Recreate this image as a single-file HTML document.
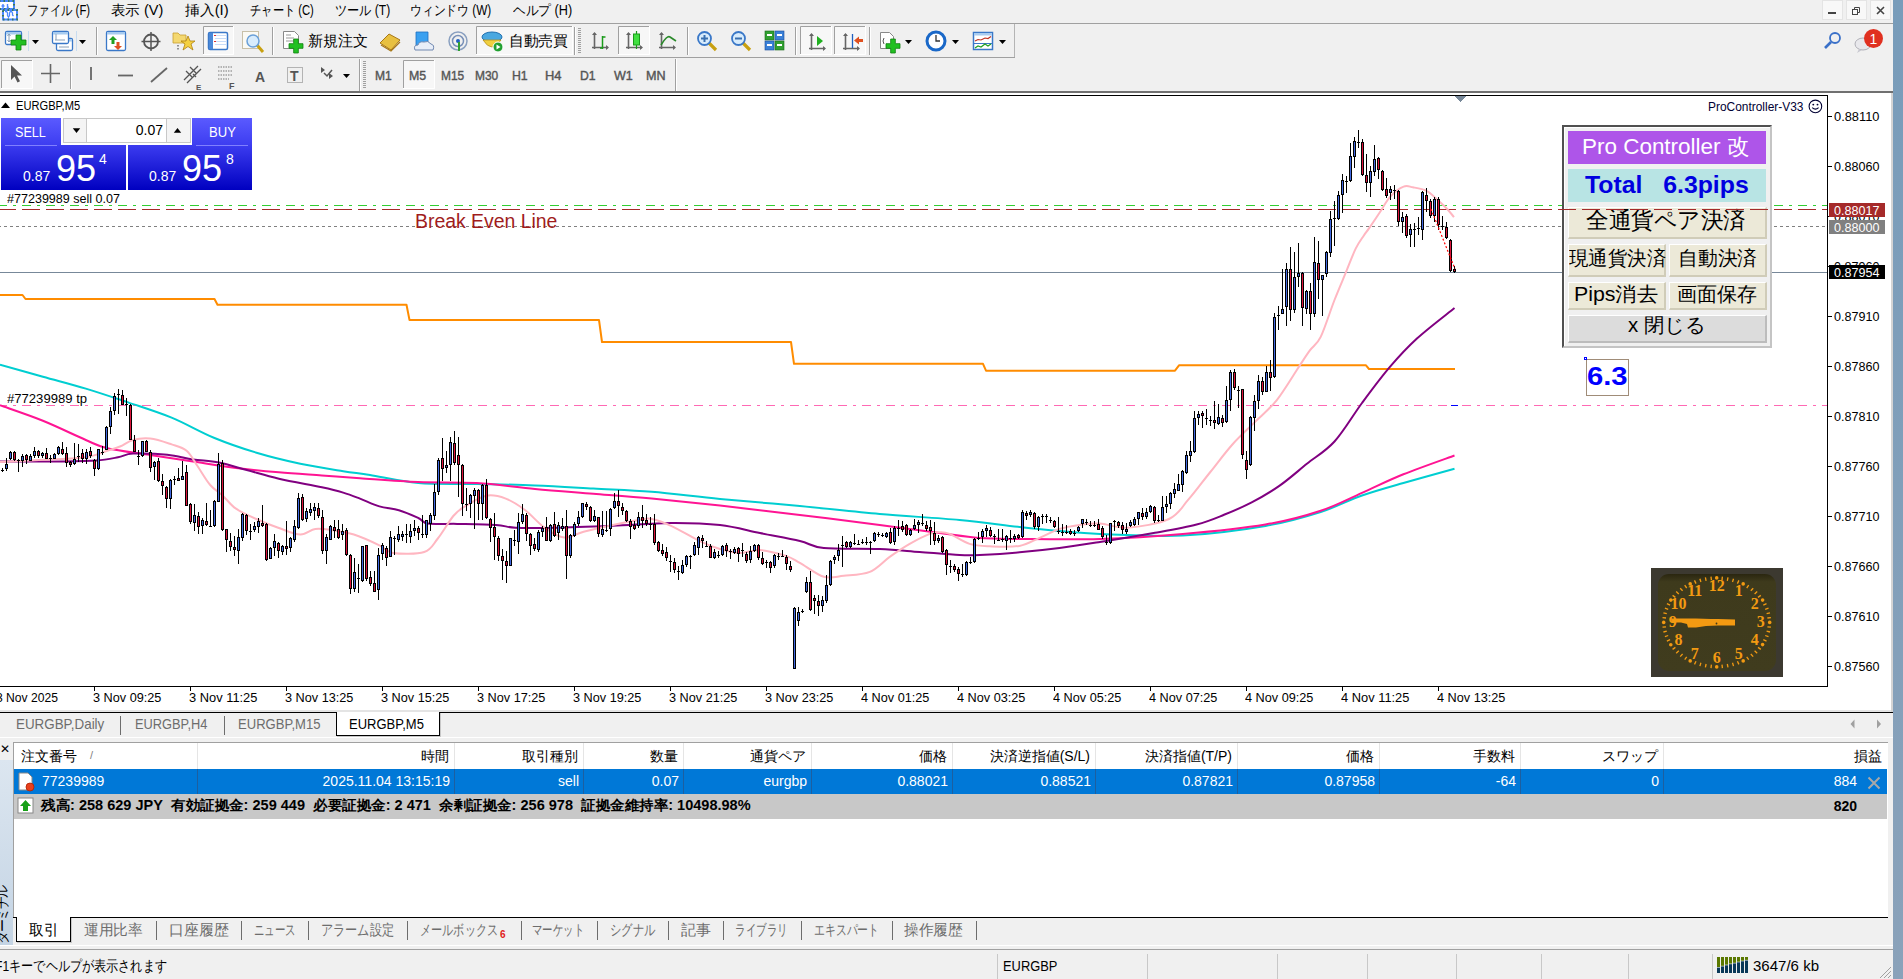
<!DOCTYPE html><html><head><meta charset="utf-8"><style>
*{box-sizing:border-box;margin:0;padding:0}
html,body{width:1903px;height:979px;overflow:hidden;background:#f0f0f0;font-family:"Liberation Sans",sans-serif;color:#000}
.a{position:absolute}
.t{position:absolute;white-space:nowrap;line-height:1}
.pl{position:absolute;left:1834px;font-size:12px;line-height:13px;white-space:nowrap}
.tl{position:absolute;top:691px;font-size:12px;line-height:13px;white-space:nowrap}
.btn{position:absolute;background:#ece9d8;border-style:solid;border-width:1px 2px 2px 1px;border-color:#fff #a0a0a0 #a0a0a0 #fff;text-align:center;white-space:nowrap;color:#000}
</style></head><body>
<div class="a" style="left:1893px;top:0;width:10px;height:979px;background:linear-gradient(#789cba,#8aa2ba)"></div>
<div class="a" style="left:0;top:23px;width:1893px;height:1px;background:#a0a0a0"></div>
<div class="t f" style="left:26.6px;top:3px;font-size:14px;transform:scaleX(0.8116);transform-origin:0 0">ファイル (F)</div>
<div class="t f" style="left:110.9px;top:3px;font-size:14px;transform:scaleX(1.0351);transform-origin:0 0">表示 (V)</div>
<div class="t f" style="left:185.0px;top:3px;font-size:14px;transform:scaleX(1.0592);transform-origin:0 0">挿入(I)</div>
<div class="t f" style="left:249.7px;top:3px;font-size:14px;transform:scaleX(0.8043);transform-origin:0 0">チャート (C)</div>
<div class="t f" style="left:334.5px;top:3px;font-size:14px;transform:scaleX(0.8667);transform-origin:0 0">ツール (T)</div>
<div class="t f" style="left:410.1px;top:3px;font-size:14px;transform:scaleX(0.8424);transform-origin:0 0">ウィンドウ (W)</div>
<div class="t f" style="left:513.4px;top:3px;font-size:14px;transform:scaleX(0.9063);transform-origin:0 0">ヘルプ (H)</div>
<div class="a" style="left:0;top:57px;width:1015px;height:1px;background:#a0a0a0"></div>
<div class="a" style="left:0;top:91px;width:1893px;height:2px;background:#707070"></div>
<svg class="a" style="left:0;top:24px" width="1893" height="33" viewBox="0 24 1893 33"><rect x="5.5" y="31.5" width="16" height="13" rx="1.5" fill="#fff" stroke="#3a78c8" stroke-width="1.3"/><rect x="6" y="32" width="15" height="2.5" fill="#a8ccf0"/><path d="M9,34 v8 M7.5,36 l1.5,-2 1.5,2 M7.5,40 l1.5,2 1.5,-2" stroke="#8aa0b8" fill="none" stroke-width="1"/><path d="M16.0,35 h5.0 v5.0 h5.0 v5.0 h-5.0 v5.0 h-5.0 v-5.0 h-5.0 v-5.0 h5.0 z" fill="#22c022" stroke="#108010" stroke-width="0.8"/><rect x="28" y="31" width="1" height="20" fill="#c8dcf0"/><path d="M32,40 h7 l-3.5,4 z" fill="#000"/><rect x="56.5" y="38.5" width="16" height="12" rx="1.5" fill="#fff" stroke="#3a78c8" stroke-width="1.3"/><rect x="57" y="39" width="15" height="2.5" fill="#a8ccf0"/><rect x="52.5" y="31.5" width="16" height="12" rx="1.5" fill="#fff" stroke="#3a78c8" stroke-width="1.3"/><rect x="53" y="32" width="15" height="2.5" fill="#a8ccf0"/><path d="M55,40 h10 M56,34 v6" stroke="#8aa0b8" stroke-width="1"/><path d="M59,47 h10" stroke="#8aa0b8" stroke-width="1"/><rect x="76" y="31" width="1" height="20" fill="#c8dcf0"/><path d="M79,40 h7 l-3.5,4 z" fill="#000"/><rect x="96" y="27" width="1" height="28" fill="#a0a0a0"/><rect x="97" y="27" width="1" height="28" fill="#fff"/><rect x="106.5" y="31.5" width="19" height="19" rx="1.5" fill="#fff" stroke="#3a78c8" stroke-width="1.3"/><rect x="107" y="32" width="18" height="2.5" fill="#a8ccf0"/><path d="M113,36 l4,4 h-2.5 v4 h-3 v-4 h-2.5 z" fill="#20a020"/><path d="M118,50 l4,-4 h-2.5 v-4 h-3 v4 h-2.5 z" fill="#e05020"/><circle cx="151" cy="41.5" r="7" fill="none" stroke="#555" stroke-width="1.8"/><path d="M151,32 v19 M141.5,41.5 h19" stroke="#555" stroke-width="1.5"/><path d="M173,33 h5 l2,2 h6 v8 h-13 z" fill="#f4d870" stroke="#c8a030" stroke-width="0.8"/><polygon points="188,36 190,41 195,41 191,44 193,50 188,46.5 183,50 185,44 181,41 186,41" fill="#f4d040" stroke="#b08010" stroke-width="0.8"/><path d="M178,45 v6" stroke="#333" stroke-dasharray="1.5 1.5"/><rect x="203" y="26" width="31" height="29" fill="#f7f7f7"/><path d="M203.5,55 V26.5 H234" stroke="#a0a0a0" fill="none"/><path d="M233.5,26 V54.5 H203" stroke="#fff" fill="none"/><rect x="208.5" y="32.5" width="19" height="17" rx="1.5" fill="#fff" stroke="#3a78c8" stroke-width="1.5"/><rect x="209" y="33" width="4" height="16" fill="#4a88d8"/><path d="M215,35.5 h12 M215,38.5 h12 M215,41.5 h12 M215,44.5 h12" stroke="#c8dcf8" stroke-width="1"/><path d="M214,35.5 h2 M214,41.5 h2" stroke="#e03030"/><rect x="242.5" y="31.5" width="16" height="17" fill="#fbfaf4" stroke="#c8c0a8"/><line x1="257" y1="45" x2="263" y2="52" stroke="#c8a010" stroke-width="3"/><circle cx="253" cy="41" r="6" fill="#d8ecfc" stroke="#6aa0d8" stroke-width="1.5"/><rect x="272" y="27" width="1" height="28" fill="#a0a0a0"/><rect x="273" y="27" width="1" height="28" fill="#fff"/><path d="M283.5,31.5 h11 l4,4 v13 h-15 z" fill="#fff" stroke="#888" stroke-width="1"/><path d="M286,35 h5 M286,38 h8 M286,41 h8" stroke="#999"/><path d="M293.6666666666667,39 h4.666666666666667 v4.666666666666667 h4.666666666666667 v4.666666666666667 h-4.666666666666667 v4.666666666666667 h-4.666666666666667 v-4.666666666666667 h-4.666666666666667 v-4.666666666666667 h4.666666666666667 z" fill="#22c022" stroke="#108010" stroke-width="0.8"/><path d="M380,43 l9,-9 l11,6 l-9,10 z" fill="#e8c040" stroke="#a87818" stroke-width="1"/><path d="M381,45 l10,6 l9,-9" stroke="#a87818" fill="none" stroke-width="1.2"/><path d="M416,32 h12 v14 h-12 z" fill="#3aa0f0" stroke="#2070c0" stroke-width="0.8"/><path d="M415,50 q-2,-5 3,-5 q1,-4 6,-3 q4,-2 7,2 q4,1 2,6 z" fill="#e8eef8" stroke="#7088b0" stroke-width="1"/><circle cx="458" cy="41" r="9" fill="none" stroke="#8aa0c0" stroke-width="1.5"/><circle cx="458" cy="41" r="5.5" fill="none" stroke="#7890b8" stroke-width="1.5"/><circle cx="458" cy="41" r="2" fill="#2060c0"/><path d="M459,42 v9" stroke="#30a030" stroke-width="2"/><rect x="476" y="26" width="97" height="29" fill="#f7f7f7"/><path d="M476.5,55 V26.5 H573" stroke="#a0a0a0" fill="none"/><path d="M572.5,26 V54.5 H476" stroke="#fff" fill="none"/><ellipse cx="492" cy="37" rx="10" ry="5" fill="#4aa8e0" stroke="#2070b0" stroke-width="1"/><path d="M483,40 q9,14 18,0 z" fill="#f0d040" stroke="#b89020" stroke-width="0.8"/><circle cx="498" cy="47" r="5" fill="#20a030" stroke="#fff" stroke-width="1"/><path d="M496.5,44.5 l4,2.5 l-4,2.5 z" fill="#fff"/><rect x="574" y="27" width="1" height="28" fill="#a0a0a0"/><rect x="575" y="27" width="1" height="28" fill="#fff"/><rect x="578" y="28" width="3" height="1" fill="#a0a0a0"/><rect x="578" y="30" width="3" height="1" fill="#a0a0a0"/><rect x="578" y="32" width="3" height="1" fill="#a0a0a0"/><rect x="578" y="34" width="3" height="1" fill="#a0a0a0"/><rect x="578" y="36" width="3" height="1" fill="#a0a0a0"/><rect x="578" y="38" width="3" height="1" fill="#a0a0a0"/><rect x="578" y="40" width="3" height="1" fill="#a0a0a0"/><rect x="578" y="42" width="3" height="1" fill="#a0a0a0"/><rect x="578" y="44" width="3" height="1" fill="#a0a0a0"/><rect x="578" y="46" width="3" height="1" fill="#a0a0a0"/><rect x="578" y="48" width="3" height="1" fill="#a0a0a0"/><rect x="578" y="50" width="3" height="1" fill="#a0a0a0"/><rect x="578" y="52" width="3" height="1" fill="#a0a0a0"/><path d="M594.5,33 V49 M592,47.5 H608" stroke="#666" stroke-width="1.6" fill="none"/><path d="M594.5,32 l-2.5,3 h5 z M609,47.5 l-3,-2.5 v5 z" fill="#666"/><path d="M602.5,36 v13 M602.5,37 h3 M600,48 h2.5" stroke="#1a9a1a" stroke-width="1.5" fill="none"/><rect x="618" y="26" width="32" height="29" fill="#f7f7f7"/><path d="M618.5,55 V26.5 H650" stroke="#a0a0a0" fill="none"/><path d="M649.5,26 V54.5 H618" stroke="#fff" fill="none"/><path d="M628.5,33 V49 M626,47.5 H642" stroke="#666" stroke-width="1.6" fill="none"/><path d="M628.5,32 l-2.5,3 h5 z M643,47.5 l-3,-2.5 v5 z" fill="#666"/><path d="M636.5,31 v18" stroke="#1a9a1a" stroke-width="1.2"/><rect x="633.5" y="34" width="6" height="11" fill="#40e040" stroke="#1a9a1a" stroke-width="1"/><path d="M661.5,33 V49 M659,47.5 H675" stroke="#666" stroke-width="1.6" fill="none"/><path d="M661.5,32 l-2.5,3 h5 z M676,47.5 l-3,-2.5 v5 z" fill="#666"/><path d="M661,45 q6,-10 9,-8 q3,2 6,4" stroke="#2a8a2a" stroke-width="1.6" fill="none"/><rect x="687" y="27" width="1" height="28" fill="#a0a0a0"/><rect x="688" y="27" width="1" height="28" fill="#fff"/><line x1="709" y1="43" x2="716" y2="50" stroke="#c8a010" stroke-width="3.2"/><circle cx="704.5" cy="38.5" r="6.5" fill="#d8ecfc" stroke="#3a78c8" stroke-width="1.8"/><rect x="701" y="37.5" width="7" height="2" fill="#3a70b0"/><rect x="703.5" y="35" width="2" height="7" fill="#3a70b0"/><line x1="743" y1="43" x2="750" y2="50" stroke="#c8a010" stroke-width="3.2"/><circle cx="738.5" cy="38.5" r="6.5" fill="#d8ecfc" stroke="#3a78c8" stroke-width="1.8"/><rect x="735" y="37.5" width="7" height="2" fill="#3a70b0"/><rect x="765" y="31" width="9" height="9" fill="#30a030" stroke="#1a6a1a" stroke-width="0.6"/><rect x="775" y="31" width="9" height="9" fill="#3a80d8" stroke="#1a4a9a" stroke-width="0.6"/><rect x="765" y="41" width="9" height="9" fill="#3a80d8" stroke="#1a4a9a" stroke-width="0.6"/><rect x="775" y="41" width="9" height="9" fill="#30a030" stroke="#1a6a1a" stroke-width="0.6"/><path d="M767,35 h5 M777,35 h5 M767,45 h5 M777,45 h5" stroke="#fff" stroke-width="2"/><rect x="795" y="27" width="1" height="28" fill="#a0a0a0"/><rect x="796" y="27" width="1" height="28" fill="#fff"/><rect x="800" y="26" width="32" height="29" fill="#f7f7f7"/><path d="M800.5,55 V26.5 H832" stroke="#a0a0a0" fill="none"/><path d="M831.5,26 V54.5 H800" stroke="#fff" fill="none"/><path d="M811.5,34 V50 M809,48.5 H825" stroke="#666" stroke-width="1.6" fill="none"/><path d="M811.5,33 l-2.5,3 h5 z M826,48.5 l-3,-2.5 v5 z" fill="#666"/><path d="M817,36 v10 l6,-5 z" fill="#20b020"/><rect x="834" y="26" width="32" height="29" fill="#f7f7f7"/><path d="M834.5,55 V26.5 H866" stroke="#a0a0a0" fill="none"/><path d="M865.5,26 V54.5 H834" stroke="#fff" fill="none"/><path d="M845.5,34 V50 M843,48.5 H859" stroke="#666" stroke-width="1.6" fill="none"/><path d="M845.5,33 l-2.5,3 h5 z M860,48.5 l-3,-2.5 v5 z" fill="#666"/><path d="M852.5,34 v14" stroke="#2060c0" stroke-width="1.3"/><path d="M854,40.5 l5,-4 v2.5 h4 v3 h-4 v2.5 z" fill="#e05020"/><rect x="869" y="27" width="1" height="28" fill="#a0a0a0"/><rect x="870" y="27" width="1" height="28" fill="#fff"/><path d="M880.5,32.5 h9 l4,4 v12 h-13 z" fill="#fff" stroke="#888"/><path d="M884,38 q-2,3 0,6" stroke="#555" fill="none"/><path d="M890.6666666666666,39 h4.666666666666667 v4.666666666666667 h4.666666666666667 v4.666666666666667 h-4.666666666666667 v4.666666666666667 h-4.666666666666667 v-4.666666666666667 h-4.666666666666667 v-4.666666666666667 h4.666666666666667 z" fill="#22c022" stroke="#108010" stroke-width="0.8"/><path d="M905,40 h7 l-3.5,4 z" fill="#000"/><circle cx="936" cy="41" r="9" fill="#fff" stroke="#1a68c8" stroke-width="3"/><path d="M936,35 v6 h4" stroke="#333" stroke-width="1.3" fill="none"/><path d="M952,40 h7 l-3.5,4 z" fill="#000"/><rect x="973.5" y="32.5" width="19" height="17" fill="#fff" stroke="#3a78c8" stroke-width="1.5"/><rect x="974" y="33" width="18" height="2.5" fill="#a8ccf0"/><path d="M975,41 l3,-1.5 3,0.5 4,-2 3,0.5 3,-2" stroke="#c03020" fill="none" stroke-width="1.2"/><rect x="974" y="43" width="18" height="1" fill="#3a78c8"/><path d="M975,48 l3,-2 3,1 4,-3 3,2 3,-2" stroke="#20a020" fill="none" stroke-width="1.2"/><path d="M999,40 h7 l-3.5,4 z" fill="#000"/><rect x="1014" y="24" width="1" height="34" fill="#b4b4b4"/><circle cx="1835" cy="38" r="5" fill="none" stroke="#3a70c8" stroke-width="1.8"/><line x1="1831" y1="42" x2="1825" y2="48" stroke="#3a70c8" stroke-width="2.6"/><ellipse cx="1863" cy="44" rx="8" ry="6" fill="#e8e8ec" stroke="#b0b0b8" stroke-width="1"/><path d="M1859,49 l-2,4 l5,-3 z" fill="#c8c8d0"/><circle cx="1873.5" cy="38.5" r="9.5" fill="#e03020"/><text x="1873.5" y="44" font-size="14" font-family="Liberation Sans" fill="#fff" text-anchor="middle">1</text></svg>
<svg class="a" style="left:0;top:58px" width="1893" height="33" viewBox="0 58 1893 33"><rect x="1" y="60" width="32" height="29" fill="#f7f7f7"/><path d="M1.5,89 V60.5 H33" stroke="#a0a0a0" fill="none"/><path d="M32.5,60 V88.5 H1" stroke="#fff" fill="none"/><path d="M11,65 v15 l3.5,-3.5 l3,6 l2.5,-1.2 l-3,-5.8 h5 z" fill="#555"/><path d="M50.5,64 v19 M41,73.5 h19" stroke="#666" stroke-width="1.6"/><rect x="70" y="61" width="1" height="28" fill="#a0a0a0"/><rect x="71" y="61" width="1" height="28" fill="#fff"/><path d="M91,67 v13" stroke="#666" stroke-width="1.8"/><path d="M118,75.5 h15" stroke="#666" stroke-width="1.8"/><path d="M151,82 l16,-14" stroke="#666" stroke-width="1.8"/><path d="M184,80 l14,-14 M187,83 l14,-14 M186,71 l6,6 M190,67 l6,6 M193,74 l3,3" stroke="#555" stroke-width="1.3"/><text x="196" y="90" font-size="8" font-weight="bold" fill="#555" font-family="Liberation Sans">E</text><path d="M218,67 h14 M218,71 h14 M218,75 h14 M218,79 h11" stroke="#777" stroke-width="1.2" stroke-dasharray="1.5 1"/><text x="229" y="89" font-size="9" font-weight="bold" fill="#555" font-family="Liberation Sans">F</text><text x="255" y="82" font-size="14" font-weight="bold" fill="#555" font-family="Liberation Sans">A</text><rect x="287.5" y="67.5" width="15" height="15" fill="none" stroke="#777" stroke-dasharray="1 1"/><text x="290" y="81" font-size="14" font-weight="bold" fill="#555" font-family="Liberation Sans">T</text><path d="M321,67 l4,3 l-4,3 z M329,73 l4,3 l-4,3 z" fill="#555"/><path d="M324,73 l3,3 l5,-6" stroke="#555" stroke-width="1.5" fill="none"/><path d="M343,74 h7 l-3.5,4 z" fill="#000"/><rect x="359" y="59" width="1" height="32" fill="#a0a0a0"/><rect x="360" y="59" width="1" height="32" fill="#fff"/><rect x="363" y="61" width="3" height="1" fill="#a0a0a0"/><rect x="363" y="63" width="3" height="1" fill="#a0a0a0"/><rect x="363" y="65" width="3" height="1" fill="#a0a0a0"/><rect x="363" y="67" width="3" height="1" fill="#a0a0a0"/><rect x="363" y="69" width="3" height="1" fill="#a0a0a0"/><rect x="363" y="71" width="3" height="1" fill="#a0a0a0"/><rect x="363" y="73" width="3" height="1" fill="#a0a0a0"/><rect x="363" y="75" width="3" height="1" fill="#a0a0a0"/><rect x="363" y="77" width="3" height="1" fill="#a0a0a0"/><rect x="363" y="79" width="3" height="1" fill="#a0a0a0"/><rect x="363" y="81" width="3" height="1" fill="#a0a0a0"/><rect x="363" y="83" width="3" height="1" fill="#a0a0a0"/><rect x="363" y="85" width="3" height="1" fill="#a0a0a0"/><rect x="363" y="87" width="3" height="1" fill="#a0a0a0"/><rect x="403" y="60" width="32" height="29" fill="#f7f7f7"/><path d="M403.5,89 V60.5 H435" stroke="#a0a0a0" fill="none"/><path d="M434.5,60 V88.5 H403" stroke="#fff" fill="none"/><rect x="675" y="59" width="1" height="32" fill="#a0a0a0"/><rect x="676" y="59" width="1" height="32" fill="#fff"/></svg>
<div class="t f" style="left:375.2px;top:70px;font-size:12.5px;color:#555;-webkit-text-stroke:0.4px #555;transform:scaleX(0.9649);transform-origin:0 0">M1</div>
<div class="t f" style="left:409px;top:70px;font-size:12.5px;color:#555;-webkit-text-stroke:0.4px #555;transform:scaleX(0.9893);transform-origin:0 0">M5</div>
<div class="t f" style="left:440.7px;top:70px;font-size:12.5px;color:#555;-webkit-text-stroke:0.4px #555;transform:scaleX(0.9559);transform-origin:0 0">M15</div>
<div class="t f" style="left:474.6px;top:70px;font-size:12.5px;color:#555;-webkit-text-stroke:0.4px #555;transform:scaleX(0.9559);transform-origin:0 0">M30</div>
<div class="t f" style="left:512.3px;top:70px;font-size:12.5px;color:#555;-webkit-text-stroke:0.4px #555;transform:scaleX(0.9810);transform-origin:0 0">H1</div>
<div class="t f" style="left:545.4px;top:70px;font-size:12.5px;color:#555;-webkit-text-stroke:0.4px #555;transform:scaleX(1.0344);transform-origin:0 0">H4</div>
<div class="t f" style="left:580.4px;top:70px;font-size:12.5px;color:#555;-webkit-text-stroke:0.4px #555;transform:scaleX(0.9743);transform-origin:0 0">D1</div>
<div class="t f" style="left:613.8px;top:70px;font-size:12.5px;color:#555;-webkit-text-stroke:0.4px #555;transform:scaleX(1.0028);transform-origin:0 0">W1</div>
<div class="t f" style="left:645.6px;top:70px;font-size:12.5px;color:#555;-webkit-text-stroke:0.4px #555;transform:scaleX(1.0080);transform-origin:0 0">MN</div>
<div class="t f" style="left:307.5px;top:33px;font-size:15px;transform:scaleX(1.0000);transform-origin:0 0">新規注文</div>
<div class="t f" style="left:508.5px;top:33px;font-size:15px;transform:scaleX(0.9831);transform-origin:0 0">自動売買</div>
<div class="a" style="left:1822px;top:0;width:21px;height:20px;background:#f8f8f8;border:1px solid #e4e4e4"></div><div class="a" style="left:1828px;top:12px;width:8px;height:2px;background:#444"></div>
<div class="a" style="left:1846px;top:0;width:21px;height:20px;background:#f8f8f8;border:1px solid #e4e4e4"></div><svg class="a" style="left:1852px;top:6px" width="10" height="10"><rect x="0.5" y="3.5" width="5" height="5" fill="none" stroke="#444"/><path d="M2.5,3.5 v-2 h5 v5 h-2" fill="none" stroke="#444"/></svg>
<div class="a" style="left:1870px;top:0;width:21px;height:20px;background:#f8f8f8;border:1px solid #e4e4e4"></div><svg class="a" style="left:1876px;top:6px" width="10" height="10"><path d="M1,1 L8,8 M8,1 L1,8" stroke="#444" stroke-width="1.6"/></svg>
<svg class="a" style="left:0;top:0" width="20" height="22" viewBox="0 0 20 22"><rect x="-1" y="1" width="15" height="8" fill="#fff" stroke="#4a88ff" stroke-width="2"/><rect x="-1" y="1" width="15" height="8" fill="none" stroke="#3a7a5a" stroke-width="2" stroke-dasharray="1.5 3"/><path d="M3,4 v4 M1.5,6 h3 M7.5,4 v4 l1,-1.5" stroke="#4a88ff" stroke-width="1.4" fill="none"/><rect x="3" y="10" width="14" height="9.5" fill="#fff" stroke="#4a88ff" stroke-width="2"/><rect x="3" y="10" width="14" height="9.5" fill="none" stroke="#3a7a5a" stroke-width="2" stroke-dasharray="1.5 3"/><path d="M5,11.5 h1.5 l1,1.5 v2.5 l1,1.5 l1,-1.5 v-2.5 l1,-1.5 h1 l1,1.5 v2 l1,1" stroke="#4a88ff" stroke-width="1.3" fill="none"/></svg>
<div class="a" style="left:0;top:93px;width:1891px;height:618px;background:#fff"></div>
<div class="a" style="left:1891px;top:93px;width:2px;height:620px;background:#d4d4d4"></div>
<div class="a" style="left:0;top:710px;width:1891px;height:2px;background:#e4e4e4"></div>
<div class="a" style="left:0;top:712px;width:1893px;height:1px;background:#000"></div>
<svg class="a" style="left:0;top:0" width="1893" height="712" viewBox="0 0 1893 712"><g shape-rendering="crispEdges"><rect x="0" y="95" width="1828" height="1" fill="#000"/><rect x="1827" y="95" width="1" height="592" fill="#000"/><rect x="0" y="686" width="1828" height="1" fill="#000"/><line x1="0" y1="205.5" x2="1827" y2="205.5" stroke="#32cd32" stroke-width="1" stroke-dasharray="9 6 3 6" stroke-dashoffset="2"/><line x1="0" y1="209.5" x2="1827" y2="209.5" stroke="#a52a2a" stroke-width="1" stroke-dasharray="18 6" stroke-dashoffset="2"/><line x1="0" y1="226.5" x2="1827" y2="226.5" stroke="#808080" stroke-width="1" stroke-dasharray="3 3" stroke-dashoffset="2"/><line x1="0" y1="272.5" x2="1827" y2="272.5" stroke="#778899" stroke-width="1"/><line x1="0" y1="405.5" x2="1827" y2="405.5" stroke="#ff69b4" stroke-width="1" stroke-dasharray="9 6 3 6" stroke-dashoffset="2"/></g><polyline points="0.0,295.0 22.5,295.0 25.5,299.0 214.5,299.0 217.5,304.8 406.5,304.8 409.5,320.0 599.0,320.0 602.0,342.0 791.0,342.0 794.0,363.8 983.0,363.8 986.0,370.7 1175.0,370.7 1179.0,365.3 1366.0,365.3 1369.0,369.0 1455.0,369.0" fill="none" stroke="#ff8c00" stroke-width="2" stroke-linejoin="round"/><path d="M0.0,364.6 C7.1,366.6 28.6,372.8 42.9,376.8 C57.2,380.8 71.5,384.3 85.8,388.6 C100.1,392.9 114.4,397.8 128.7,402.6 C143.0,407.4 157.3,411.7 171.6,417.6 C185.9,423.5 200.2,432.1 214.5,438.0 C228.8,443.9 243.1,448.7 257.4,453.0 C271.7,457.3 286.0,460.7 300.3,463.7 C314.6,466.7 331.6,469.3 343.2,471.2 C354.8,473.1 357.5,473.0 370.0,475.0 C382.5,477.0 400.5,481.5 418.3,483.0 C436.1,484.5 457.2,483.6 476.7,484.0 C496.1,484.4 515.6,484.6 535.0,485.4 C554.4,486.1 573.8,487.4 593.3,488.5 C612.8,489.6 630.6,490.1 651.7,491.8 C672.8,493.6 695.3,496.6 720.0,499.0 C744.7,501.4 773.3,503.5 799.9,506.0 C826.5,508.5 853.1,511.7 879.7,514.0 C906.3,516.3 936.3,517.8 959.6,520.0 C982.9,522.2 1002.9,525.2 1019.5,527.0 C1036.2,528.8 1046.1,529.8 1059.5,531.0 C1072.9,532.2 1079.5,533.2 1100.0,534.0 C1120.5,534.8 1155.2,536.9 1182.8,535.5 C1210.4,534.1 1242.5,529.8 1265.5,525.9 C1288.5,522.0 1304.6,517.1 1320.7,512.0 C1336.8,506.9 1348.2,500.3 1362.0,495.5 C1375.8,490.7 1388.0,487.4 1403.4,483.0 C1418.8,478.6 1446.0,471.2 1454.5,468.8" fill="none" stroke="#00ced1" stroke-width="2"/><path d="M0.0,405.3 C7.1,407.9 28.6,415.0 42.9,420.8 C57.2,426.6 75.1,435.4 85.8,440.0 C96.5,444.6 96.6,445.7 107.3,448.2 C118.0,450.7 135.9,452.8 150.2,455.0 C164.5,457.2 178.7,459.3 193.0,461.5 C207.3,463.7 221.7,466.2 236.0,468.0 C250.3,469.8 264.6,471.1 278.9,472.3 C293.2,473.6 308.3,474.5 321.8,475.5 C335.3,476.5 343.9,477.1 360.0,478.2 C376.1,479.3 398.9,481.2 418.3,482.0 C437.8,482.8 457.2,481.9 476.7,483.0 C496.1,484.1 515.6,487.1 535.0,488.9 C554.4,490.7 573.8,492.1 593.3,493.7 C612.8,495.3 630.6,496.6 651.7,498.6 C672.8,500.6 695.3,502.9 720.0,505.6 C744.7,508.3 773.3,511.8 799.9,515.0 C826.5,518.2 856.4,522.0 879.7,525.0 C903.0,528.0 923.0,530.8 939.6,533.0 C956.2,535.2 966.3,537.0 979.6,538.0 C992.9,539.0 999.4,538.8 1019.5,539.0 C1039.6,539.2 1072.8,539.8 1100.0,539.0 C1127.2,538.2 1155.2,536.4 1182.8,534.0 C1210.4,531.6 1242.5,528.4 1265.5,524.5 C1288.5,520.6 1304.6,516.0 1320.7,510.7 C1336.8,505.4 1348.2,498.9 1362.0,492.8 C1375.8,486.7 1388.0,480.5 1403.4,474.3 C1418.8,468.1 1446.0,458.6 1454.5,455.5" fill="none" stroke="#ff1493" stroke-width="2"/><path d="M0.0,461.5 C10.7,461.5 48.3,461.7 64.4,461.5 C80.5,461.3 87.6,461.2 96.5,460.5 C105.4,459.8 111.9,458.4 118.0,457.3 C124.1,456.2 124.8,454.0 133.0,453.6 C141.2,453.2 157.3,453.7 167.3,454.7 C177.3,455.7 184.4,458.1 193.0,459.4 C201.6,460.7 209.9,460.8 218.8,462.6 C227.8,464.4 236.7,467.3 246.7,470.0 C256.7,472.7 266.4,475.8 278.9,478.7 C291.4,481.6 311.1,485.0 321.8,487.3 C332.5,489.6 336.8,490.7 343.2,492.6 C349.6,494.5 354.0,496.3 360.0,498.6 C366.0,500.9 372.9,504.4 379.4,506.4 C385.9,508.3 392.4,508.4 398.9,510.3 C405.4,512.2 413.4,515.8 418.3,518.0 C423.2,520.2 421.5,522.5 428.0,523.5 C434.5,524.5 445.9,523.7 457.2,523.9 C468.5,524.1 486.3,524.2 496.0,524.9 C505.7,525.5 505.9,527.3 515.6,527.8 C525.3,528.3 538.2,528.1 554.4,527.8 C570.6,527.5 593.3,526.6 612.8,525.8 C632.2,525.0 653.2,523.0 671.1,522.9 C689.0,522.8 705.2,523.3 720.0,525.0 C734.8,526.7 746.6,530.3 759.9,533.0 C773.2,535.7 789.2,538.5 799.9,541.0 C810.5,543.5 810.5,546.7 823.8,548.0 C837.1,549.3 863.7,548.3 879.7,549.0 C895.7,549.7 906.4,551.0 919.7,552.0 C933.0,553.0 949.6,554.5 959.6,555.0 C969.6,555.5 969.6,555.5 979.6,555.0 C989.6,554.5 1006.2,553.5 1019.5,552.3 C1032.8,551.1 1046.1,549.7 1059.5,548.0 C1072.9,546.3 1084.1,544.5 1100.0,542.0 C1115.9,539.5 1138.9,535.7 1155.0,532.8 C1171.1,529.9 1185.1,527.5 1196.6,524.5 C1208.1,521.5 1214.8,518.5 1224.0,514.8 C1233.2,511.1 1242.5,507.2 1251.7,502.4 C1260.9,497.6 1270.1,492.3 1279.3,485.9 C1288.5,479.5 1297.7,471.2 1306.9,463.8 C1316.1,456.4 1325.3,451.6 1334.5,441.5 C1343.7,431.4 1352.8,415.4 1362.0,403.0 C1371.2,390.6 1380.5,378.0 1389.7,367.2 C1398.9,356.4 1406.4,348.2 1417.2,338.3 C1428.0,328.4 1448.3,313.1 1454.5,308.0" fill="none" stroke="#800080" stroke-width="2"/><path d="M0.0,462.0 C7.1,461.6 28.6,460.6 42.9,459.8 C57.2,459.0 75.1,458.8 85.8,457.3 C96.5,455.8 101.6,452.6 107.3,450.8 C113.0,449.0 115.7,448.3 120.0,446.5 C124.3,444.7 128.0,441.3 133.0,440.0 C138.0,438.7 143.8,437.9 150.2,438.6 C156.6,439.3 165.5,442.4 171.6,444.4 C177.7,446.4 182.3,447.2 186.6,450.8 C190.9,454.4 193.4,460.1 197.3,465.8 C201.2,471.5 205.9,480.0 210.2,485.0 C214.5,490.0 218.7,491.9 223.0,495.9 C227.3,499.8 230.3,504.8 236.0,508.7 C241.7,512.6 250.2,516.3 257.4,519.5 C264.5,522.7 271.8,525.5 278.9,528.0 C286.0,530.5 294.2,534.3 300.3,534.5 C306.4,534.7 309.9,529.7 315.3,529.0 C320.7,528.3 326.1,529.3 332.5,530.2 C338.9,531.1 346.1,532.0 353.9,534.5 C361.7,537.0 372.9,542.2 379.4,545.3 C385.9,548.4 385.5,551.9 393.0,553.0 C400.5,554.1 416.7,554.4 424.2,552.0 C431.7,549.6 432.9,544.5 437.8,538.5 C442.7,532.5 448.8,521.4 453.3,516.0 C457.8,510.6 459.5,509.8 465.0,506.4 C470.5,503.0 479.6,497.0 486.4,495.7 C493.2,494.4 499.3,496.2 505.8,498.6 C512.3,501.0 518.8,505.4 525.3,510.3 C531.8,515.2 538.2,523.3 544.7,527.8 C551.2,532.3 557.7,536.9 564.2,537.5 C570.7,538.1 575.5,533.8 583.6,531.7 C591.7,529.6 603.1,526.9 612.8,524.9 C622.5,522.9 635.4,520.6 641.9,519.6 C648.4,518.6 646.8,518.0 651.7,519.0 C656.6,520.0 663.0,522.1 671.1,525.8 C679.2,529.5 692.1,537.5 700.3,541.4 C708.4,545.3 713.4,547.1 720.0,549.0 C726.6,550.9 733.3,552.8 740.0,553.0 C746.7,553.2 752.4,549.5 760.0,550.0 C767.6,550.5 779.2,553.8 785.9,555.9 C792.5,558.0 793.6,559.4 799.9,562.9 C806.2,566.4 816.5,574.6 823.8,576.8 C831.1,578.9 836.1,576.6 843.8,575.8 C851.5,575.0 862.1,575.0 869.8,571.9 C877.4,568.8 883.1,561.6 889.7,556.9 C896.4,552.2 903.0,547.7 909.7,543.9 C916.4,540.1 924.7,535.8 929.7,533.9 C934.7,532.0 936.3,532.3 939.6,532.3 C942.9,532.3 944.6,532.0 949.6,533.9 C954.6,535.8 962.9,541.8 969.6,543.9 C976.3,546.0 981.3,546.0 989.6,546.3 C997.9,546.6 1011.2,547.3 1019.5,545.9 C1027.8,544.5 1032.8,540.7 1039.5,537.9 C1046.2,535.1 1052.8,531.1 1059.5,528.9 C1066.2,526.7 1072.7,525.8 1079.4,524.9 C1086.2,524.0 1092.0,523.0 1100.0,523.5 C1108.0,524.0 1116.1,528.5 1127.6,527.8 C1139.1,527.0 1158.9,523.7 1169.0,519.0 C1179.1,514.3 1181.4,507.5 1188.3,499.7 C1195.2,491.9 1202.9,481.2 1210.3,472.0 C1217.7,462.8 1225.0,452.8 1232.4,444.5 C1239.8,436.2 1247.1,429.8 1254.5,422.4 C1261.9,415.0 1269.2,409.5 1276.6,400.3 C1283.9,391.1 1293.1,375.5 1298.6,367.2 C1304.1,358.9 1306.0,355.8 1309.7,350.7 C1313.4,345.6 1316.6,345.3 1320.7,336.9 C1324.8,328.4 1330.2,311.0 1334.5,300.0 C1338.8,289.0 1343.0,279.5 1346.5,270.9 C1350.0,262.3 1352.9,254.3 1355.8,248.4 C1358.7,242.5 1361.5,239.0 1363.7,235.7 C1365.9,232.4 1366.3,232.3 1369.0,228.4 C1371.7,224.5 1376.2,217.8 1379.7,212.5 C1383.2,207.2 1386.3,200.9 1390.3,196.6 C1394.3,192.3 1399.8,188.1 1403.6,186.6 C1407.4,185.1 1409.1,186.6 1412.9,187.3 C1416.7,188.0 1422.4,188.8 1426.2,190.6 C1430.0,192.4 1432.2,195.0 1435.5,197.9 C1438.8,200.8 1442.9,204.6 1446.0,207.8 C1449.1,211.0 1452.7,215.6 1454.0,217.1" fill="none" stroke="#ffb6c1" stroke-width="2"/><g shape-rendering="crispEdges"><rect x="2" y="468" width="1" height="4" fill="#000"/><rect x="1" y="470" width="3" height="1" fill="#000"/><rect x="6" y="458" width="1" height="13" fill="#000"/><rect x="5" y="464" width="3" height="5" fill="#000"/><rect x="6" y="465" width="1" height="3" fill="#4169e1"/><rect x="10" y="451" width="1" height="9" fill="#000"/><rect x="9" y="452" width="3" height="7" fill="#000"/><rect x="10" y="453" width="1" height="5" fill="#4169e1"/><rect x="14" y="451" width="1" height="10" fill="#000"/><rect x="13" y="452" width="3" height="8" fill="#000"/><rect x="14" y="453" width="1" height="6" fill="#dc143c"/><rect x="18" y="459" width="1" height="13" fill="#000"/><rect x="17" y="460" width="3" height="1" fill="#000"/><rect x="22" y="454" width="1" height="13" fill="#000"/><rect x="21" y="456" width="3" height="5" fill="#000"/><rect x="22" y="457" width="1" height="3" fill="#4169e1"/><rect x="26" y="454" width="1" height="10" fill="#000"/><rect x="25" y="455" width="3" height="5" fill="#000"/><rect x="26" y="456" width="1" height="3" fill="#dc143c"/><rect x="30" y="454" width="1" height="7" fill="#000"/><rect x="29" y="456" width="3" height="5" fill="#000"/><rect x="30" y="457" width="1" height="3" fill="#4169e1"/><rect x="34" y="447" width="1" height="11" fill="#000"/><rect x="33" y="451" width="3" height="5" fill="#000"/><rect x="34" y="452" width="1" height="3" fill="#4169e1"/><rect x="38" y="450" width="1" height="8" fill="#000"/><rect x="37" y="451" width="3" height="5" fill="#000"/><rect x="38" y="452" width="1" height="3" fill="#dc143c"/><rect x="42" y="452" width="1" height="6" fill="#000"/><rect x="41" y="453" width="3" height="3" fill="#000"/><rect x="42" y="454" width="1" height="1" fill="#4169e1"/><rect x="46" y="448" width="1" height="11" fill="#000"/><rect x="45" y="453" width="3" height="6" fill="#000"/><rect x="46" y="454" width="1" height="4" fill="#dc143c"/><rect x="50" y="455" width="1" height="8" fill="#000"/><rect x="49" y="458" width="3" height="1" fill="#000"/><rect x="54" y="453" width="1" height="6" fill="#000"/><rect x="53" y="454" width="3" height="5" fill="#000"/><rect x="54" y="455" width="1" height="3" fill="#4169e1"/><rect x="58" y="446" width="1" height="9" fill="#000"/><rect x="57" y="447" width="3" height="7" fill="#000"/><rect x="58" y="448" width="1" height="5" fill="#4169e1"/><rect x="62" y="442" width="1" height="13" fill="#000"/><rect x="61" y="449" width="3" height="5" fill="#000"/><rect x="62" y="450" width="1" height="3" fill="#dc143c"/><rect x="66" y="447" width="1" height="20" fill="#000"/><rect x="65" y="453" width="3" height="10" fill="#000"/><rect x="66" y="454" width="1" height="8" fill="#dc143c"/><rect x="70" y="461" width="1" height="6" fill="#000"/><rect x="69" y="462" width="3" height="3" fill="#000"/><rect x="70" y="463" width="1" height="1" fill="#dc143c"/><rect x="74" y="443" width="1" height="22" fill="#000"/><rect x="73" y="459" width="3" height="5" fill="#000"/><rect x="74" y="460" width="1" height="3" fill="#4169e1"/><rect x="78" y="444" width="1" height="18" fill="#000"/><rect x="77" y="456" width="3" height="1" fill="#000"/><rect x="82" y="449" width="1" height="14" fill="#000"/><rect x="81" y="453" width="3" height="6" fill="#000"/><rect x="82" y="454" width="1" height="4" fill="#dc143c"/><rect x="86" y="449" width="1" height="15" fill="#000"/><rect x="85" y="452" width="3" height="7" fill="#000"/><rect x="86" y="453" width="1" height="5" fill="#4169e1"/><rect x="90" y="447" width="1" height="11" fill="#000"/><rect x="89" y="451" width="3" height="5" fill="#000"/><rect x="90" y="452" width="1" height="3" fill="#dc143c"/><rect x="94" y="459" width="1" height="17" fill="#000"/><rect x="93" y="460" width="3" height="9" fill="#000"/><rect x="94" y="461" width="1" height="7" fill="#dc143c"/><rect x="98" y="449" width="1" height="21" fill="#000"/><rect x="97" y="449" width="3" height="20" fill="#000"/><rect x="98" y="450" width="1" height="18" fill="#4169e1"/><rect x="102" y="446" width="1" height="9" fill="#000"/><rect x="101" y="452" width="3" height="1" fill="#000"/><rect x="106" y="426" width="1" height="24" fill="#000"/><rect x="105" y="427" width="3" height="23" fill="#000"/><rect x="106" y="428" width="1" height="21" fill="#4169e1"/><rect x="110" y="407" width="1" height="27" fill="#000"/><rect x="109" y="411" width="3" height="16" fill="#000"/><rect x="110" y="412" width="1" height="14" fill="#4169e1"/><rect x="114" y="393" width="1" height="22" fill="#000"/><rect x="113" y="396" width="3" height="15" fill="#000"/><rect x="114" y="397" width="1" height="13" fill="#4169e1"/><rect x="118" y="389" width="1" height="25" fill="#000"/><rect x="117" y="394" width="3" height="1" fill="#000"/><rect x="122" y="390" width="1" height="15" fill="#000"/><rect x="121" y="395" width="3" height="10" fill="#000"/><rect x="122" y="396" width="1" height="8" fill="#dc143c"/><rect x="126" y="398" width="1" height="18" fill="#000"/><rect x="125" y="404" width="3" height="1" fill="#000"/><rect x="130" y="404" width="1" height="36" fill="#000"/><rect x="129" y="405" width="3" height="35" fill="#000"/><rect x="130" y="406" width="1" height="33" fill="#dc143c"/><rect x="134" y="435" width="1" height="17" fill="#000"/><rect x="133" y="440" width="3" height="12" fill="#000"/><rect x="134" y="441" width="1" height="10" fill="#dc143c"/><rect x="138" y="450" width="1" height="15" fill="#000"/><rect x="137" y="456" width="3" height="1" fill="#000"/><rect x="142" y="441" width="1" height="16" fill="#000"/><rect x="141" y="441" width="3" height="15" fill="#000"/><rect x="142" y="442" width="1" height="13" fill="#4169e1"/><rect x="146" y="440" width="1" height="12" fill="#000"/><rect x="145" y="441" width="3" height="11" fill="#000"/><rect x="146" y="442" width="1" height="9" fill="#dc143c"/><rect x="150" y="450" width="1" height="22" fill="#000"/><rect x="149" y="452" width="3" height="16" fill="#000"/><rect x="150" y="453" width="1" height="14" fill="#dc143c"/><rect x="154" y="461" width="1" height="19" fill="#000"/><rect x="153" y="462" width="3" height="5" fill="#000"/><rect x="154" y="463" width="1" height="3" fill="#4169e1"/><rect x="158" y="458" width="1" height="24" fill="#000"/><rect x="157" y="461" width="3" height="20" fill="#000"/><rect x="158" y="462" width="1" height="18" fill="#dc143c"/><rect x="162" y="474" width="1" height="21" fill="#000"/><rect x="161" y="481" width="3" height="5" fill="#000"/><rect x="162" y="482" width="1" height="3" fill="#dc143c"/><rect x="166" y="486" width="1" height="22" fill="#000"/><rect x="165" y="487" width="3" height="12" fill="#000"/><rect x="166" y="488" width="1" height="10" fill="#dc143c"/><rect x="170" y="479" width="1" height="30" fill="#000"/><rect x="169" y="480" width="3" height="19" fill="#000"/><rect x="170" y="481" width="1" height="17" fill="#4169e1"/><rect x="174" y="476" width="1" height="9" fill="#000"/><rect x="173" y="479" width="3" height="1" fill="#000"/><rect x="178" y="468" width="1" height="13" fill="#000"/><rect x="177" y="478" width="3" height="3" fill="#000"/><rect x="178" y="479" width="1" height="1" fill="#dc143c"/><rect x="182" y="461" width="1" height="19" fill="#000"/><rect x="181" y="476" width="3" height="4" fill="#000"/><rect x="182" y="477" width="1" height="2" fill="#4169e1"/><rect x="186" y="465" width="1" height="41" fill="#000"/><rect x="185" y="472" width="3" height="34" fill="#000"/><rect x="186" y="473" width="1" height="32" fill="#dc143c"/><rect x="190" y="503" width="1" height="21" fill="#000"/><rect x="189" y="504" width="3" height="18" fill="#000"/><rect x="190" y="505" width="1" height="16" fill="#dc143c"/><rect x="194" y="504" width="1" height="27" fill="#000"/><rect x="193" y="515" width="3" height="8" fill="#000"/><rect x="194" y="516" width="1" height="6" fill="#4169e1"/><rect x="198" y="512" width="1" height="22" fill="#000"/><rect x="197" y="516" width="3" height="11" fill="#000"/><rect x="198" y="517" width="1" height="9" fill="#dc143c"/><rect x="202" y="518" width="1" height="16" fill="#000"/><rect x="201" y="520" width="3" height="6" fill="#000"/><rect x="202" y="521" width="1" height="4" fill="#4169e1"/><rect x="206" y="503" width="1" height="23" fill="#000"/><rect x="205" y="521" width="3" height="4" fill="#000"/><rect x="206" y="522" width="1" height="2" fill="#dc143c"/><rect x="210" y="510" width="1" height="17" fill="#000"/><rect x="209" y="526" width="3" height="1" fill="#000"/><rect x="214" y="500" width="1" height="27" fill="#000"/><rect x="213" y="501" width="3" height="25" fill="#000"/><rect x="214" y="502" width="1" height="23" fill="#4169e1"/><rect x="218" y="453" width="1" height="49" fill="#000"/><rect x="217" y="464" width="3" height="38" fill="#000"/><rect x="218" y="465" width="1" height="36" fill="#4169e1"/><rect x="222" y="460" width="1" height="71" fill="#000"/><rect x="221" y="463" width="3" height="67" fill="#000"/><rect x="222" y="464" width="1" height="65" fill="#dc143c"/><rect x="226" y="529" width="1" height="23" fill="#000"/><rect x="225" y="529" width="3" height="11" fill="#000"/><rect x="226" y="530" width="1" height="9" fill="#dc143c"/><rect x="230" y="533" width="1" height="18" fill="#000"/><rect x="229" y="541" width="3" height="6" fill="#000"/><rect x="230" y="542" width="1" height="4" fill="#dc143c"/><rect x="234" y="536" width="1" height="20" fill="#000"/><rect x="233" y="547" width="3" height="3" fill="#000"/><rect x="234" y="548" width="1" height="1" fill="#dc143c"/><rect x="238" y="529" width="1" height="35" fill="#000"/><rect x="237" y="537" width="3" height="14" fill="#000"/><rect x="238" y="538" width="1" height="12" fill="#4169e1"/><rect x="242" y="513" width="1" height="28" fill="#000"/><rect x="241" y="514" width="3" height="24" fill="#000"/><rect x="242" y="515" width="1" height="22" fill="#4169e1"/><rect x="246" y="514" width="1" height="21" fill="#000"/><rect x="245" y="515" width="3" height="16" fill="#000"/><rect x="246" y="516" width="1" height="14" fill="#dc143c"/><rect x="250" y="524" width="1" height="16" fill="#000"/><rect x="249" y="531" width="3" height="1" fill="#000"/><rect x="254" y="522" width="1" height="10" fill="#000"/><rect x="253" y="526" width="3" height="4" fill="#000"/><rect x="254" y="527" width="1" height="2" fill="#4169e1"/><rect x="258" y="518" width="1" height="15" fill="#000"/><rect x="257" y="521" width="3" height="6" fill="#000"/><rect x="258" y="522" width="1" height="4" fill="#4169e1"/><rect x="262" y="505" width="1" height="22" fill="#000"/><rect x="261" y="523" width="3" height="3" fill="#000"/><rect x="262" y="524" width="1" height="1" fill="#dc143c"/><rect x="266" y="523" width="1" height="38" fill="#000"/><rect x="265" y="524" width="3" height="36" fill="#000"/><rect x="266" y="525" width="1" height="34" fill="#dc143c"/><rect x="270" y="547" width="1" height="12" fill="#000"/><rect x="269" y="548" width="3" height="11" fill="#000"/><rect x="270" y="549" width="1" height="9" fill="#4169e1"/><rect x="274" y="534" width="1" height="22" fill="#000"/><rect x="273" y="541" width="3" height="7" fill="#000"/><rect x="274" y="542" width="1" height="5" fill="#4169e1"/><rect x="278" y="542" width="1" height="16" fill="#000"/><rect x="277" y="543" width="3" height="8" fill="#000"/><rect x="278" y="544" width="1" height="6" fill="#dc143c"/><rect x="282" y="545" width="1" height="10" fill="#000"/><rect x="281" y="546" width="3" height="6" fill="#000"/><rect x="282" y="547" width="1" height="4" fill="#4169e1"/><rect x="286" y="521" width="1" height="34" fill="#000"/><rect x="285" y="546" width="3" height="3" fill="#000"/><rect x="286" y="547" width="1" height="1" fill="#dc143c"/><rect x="290" y="537" width="1" height="15" fill="#000"/><rect x="289" y="538" width="3" height="10" fill="#000"/><rect x="290" y="539" width="1" height="8" fill="#4169e1"/><rect x="294" y="520" width="1" height="22" fill="#000"/><rect x="293" y="526" width="3" height="14" fill="#000"/><rect x="294" y="527" width="1" height="12" fill="#4169e1"/><rect x="298" y="493" width="1" height="36" fill="#000"/><rect x="297" y="498" width="3" height="30" fill="#000"/><rect x="298" y="499" width="1" height="28" fill="#4169e1"/><rect x="302" y="494" width="1" height="27" fill="#000"/><rect x="301" y="497" width="3" height="23" fill="#000"/><rect x="302" y="498" width="1" height="21" fill="#dc143c"/><rect x="306" y="508" width="1" height="14" fill="#000"/><rect x="305" y="511" width="3" height="8" fill="#000"/><rect x="306" y="512" width="1" height="6" fill="#4169e1"/><rect x="310" y="503" width="1" height="13" fill="#000"/><rect x="309" y="509" width="3" height="4" fill="#000"/><rect x="310" y="510" width="1" height="2" fill="#4169e1"/><rect x="314" y="503" width="1" height="17" fill="#000"/><rect x="313" y="507" width="3" height="4" fill="#000"/><rect x="314" y="508" width="1" height="2" fill="#4169e1"/><rect x="318" y="503" width="1" height="15" fill="#000"/><rect x="317" y="508" width="3" height="8" fill="#000"/><rect x="318" y="509" width="1" height="6" fill="#dc143c"/><rect x="322" y="510" width="1" height="44" fill="#000"/><rect x="321" y="517" width="3" height="34" fill="#000"/><rect x="322" y="518" width="1" height="32" fill="#dc143c"/><rect x="326" y="534" width="1" height="30" fill="#000"/><rect x="325" y="537" width="3" height="14" fill="#000"/><rect x="326" y="538" width="1" height="12" fill="#4169e1"/><rect x="330" y="525" width="1" height="15" fill="#000"/><rect x="329" y="526" width="3" height="14" fill="#000"/><rect x="330" y="527" width="1" height="12" fill="#4169e1"/><rect x="334" y="520" width="1" height="18" fill="#000"/><rect x="333" y="527" width="3" height="4" fill="#000"/><rect x="334" y="528" width="1" height="2" fill="#dc143c"/><rect x="338" y="520" width="1" height="19" fill="#000"/><rect x="337" y="529" width="3" height="9" fill="#000"/><rect x="338" y="530" width="1" height="7" fill="#dc143c"/><rect x="342" y="524" width="1" height="16" fill="#000"/><rect x="341" y="531" width="3" height="4" fill="#000"/><rect x="342" y="532" width="1" height="2" fill="#4169e1"/><rect x="346" y="528" width="1" height="28" fill="#000"/><rect x="345" y="530" width="3" height="25" fill="#000"/><rect x="346" y="531" width="1" height="23" fill="#dc143c"/><rect x="350" y="554" width="1" height="40" fill="#000"/><rect x="349" y="555" width="3" height="34" fill="#000"/><rect x="350" y="556" width="1" height="32" fill="#dc143c"/><rect x="354" y="558" width="1" height="34" fill="#000"/><rect x="353" y="572" width="3" height="17" fill="#000"/><rect x="354" y="573" width="1" height="15" fill="#4169e1"/><rect x="358" y="564" width="1" height="29" fill="#000"/><rect x="357" y="578" width="3" height="1" fill="#000"/><rect x="362" y="546" width="1" height="36" fill="#000"/><rect x="361" y="546" width="3" height="35" fill="#000"/><rect x="362" y="547" width="1" height="33" fill="#4169e1"/><rect x="366" y="545" width="1" height="36" fill="#000"/><rect x="365" y="545" width="3" height="34" fill="#000"/><rect x="366" y="546" width="1" height="32" fill="#dc143c"/><rect x="370" y="571" width="1" height="15" fill="#000"/><rect x="369" y="577" width="3" height="7" fill="#000"/><rect x="370" y="578" width="1" height="5" fill="#dc143c"/><rect x="374" y="571" width="1" height="21" fill="#000"/><rect x="373" y="583" width="3" height="9" fill="#000"/><rect x="374" y="584" width="1" height="7" fill="#dc143c"/><rect x="378" y="548" width="1" height="52" fill="#000"/><rect x="377" y="555" width="3" height="35" fill="#000"/><rect x="378" y="556" width="1" height="33" fill="#4169e1"/><rect x="382" y="543" width="1" height="17" fill="#000"/><rect x="381" y="545" width="3" height="9" fill="#000"/><rect x="382" y="546" width="1" height="7" fill="#4169e1"/><rect x="386" y="546" width="1" height="20" fill="#000"/><rect x="385" y="548" width="3" height="10" fill="#000"/><rect x="386" y="549" width="1" height="8" fill="#dc143c"/><rect x="390" y="531" width="1" height="26" fill="#000"/><rect x="389" y="537" width="3" height="20" fill="#000"/><rect x="390" y="538" width="1" height="18" fill="#4169e1"/><rect x="394" y="536" width="1" height="19" fill="#000"/><rect x="393" y="538" width="3" height="1" fill="#000"/><rect x="398" y="526" width="1" height="16" fill="#000"/><rect x="397" y="534" width="3" height="6" fill="#000"/><rect x="398" y="535" width="1" height="4" fill="#4169e1"/><rect x="402" y="531" width="1" height="10" fill="#000"/><rect x="401" y="534" width="3" height="3" fill="#000"/><rect x="402" y="535" width="1" height="1" fill="#4169e1"/><rect x="406" y="524" width="1" height="19" fill="#000"/><rect x="405" y="534" width="3" height="1" fill="#000"/><rect x="410" y="524" width="1" height="19" fill="#000"/><rect x="409" y="531" width="3" height="6" fill="#000"/><rect x="410" y="532" width="1" height="4" fill="#4169e1"/><rect x="414" y="520" width="1" height="16" fill="#000"/><rect x="413" y="528" width="3" height="3" fill="#000"/><rect x="414" y="529" width="1" height="1" fill="#4169e1"/><rect x="418" y="526" width="1" height="14" fill="#000"/><rect x="417" y="528" width="3" height="5" fill="#000"/><rect x="418" y="529" width="1" height="3" fill="#dc143c"/><rect x="422" y="515" width="1" height="23" fill="#000"/><rect x="421" y="534" width="3" height="1" fill="#000"/><rect x="426" y="520" width="1" height="18" fill="#000"/><rect x="425" y="520" width="3" height="15" fill="#000"/><rect x="426" y="521" width="1" height="13" fill="#4169e1"/><rect x="430" y="513" width="1" height="18" fill="#000"/><rect x="429" y="515" width="3" height="9" fill="#000"/><rect x="430" y="516" width="1" height="7" fill="#4169e1"/><rect x="434" y="484" width="1" height="36" fill="#000"/><rect x="433" y="492" width="3" height="24" fill="#000"/><rect x="434" y="493" width="1" height="22" fill="#4169e1"/><rect x="438" y="458" width="1" height="37" fill="#000"/><rect x="437" y="460" width="3" height="32" fill="#000"/><rect x="438" y="461" width="1" height="30" fill="#4169e1"/><rect x="442" y="438" width="1" height="43" fill="#000"/><rect x="441" y="458" width="3" height="11" fill="#000"/><rect x="442" y="459" width="1" height="9" fill="#dc143c"/><rect x="446" y="451" width="1" height="22" fill="#000"/><rect x="445" y="465" width="3" height="3" fill="#000"/><rect x="446" y="466" width="1" height="1" fill="#4169e1"/><rect x="450" y="437" width="1" height="44" fill="#000"/><rect x="449" y="442" width="3" height="23" fill="#000"/><rect x="450" y="443" width="1" height="21" fill="#4169e1"/><rect x="454" y="431" width="1" height="34" fill="#000"/><rect x="453" y="443" width="3" height="20" fill="#000"/><rect x="454" y="444" width="1" height="18" fill="#dc143c"/><rect x="458" y="437" width="1" height="60" fill="#000"/><rect x="457" y="455" width="3" height="10" fill="#000"/><rect x="458" y="456" width="1" height="8" fill="#dc143c"/><rect x="462" y="464" width="1" height="52" fill="#000"/><rect x="461" y="465" width="3" height="39" fill="#000"/><rect x="462" y="466" width="1" height="37" fill="#dc143c"/><rect x="466" y="488" width="1" height="23" fill="#000"/><rect x="465" y="504" width="3" height="1" fill="#000"/><rect x="470" y="494" width="1" height="24" fill="#000"/><rect x="469" y="495" width="3" height="9" fill="#000"/><rect x="470" y="496" width="1" height="7" fill="#4169e1"/><rect x="474" y="488" width="1" height="41" fill="#000"/><rect x="473" y="490" width="3" height="6" fill="#000"/><rect x="474" y="491" width="1" height="4" fill="#4169e1"/><rect x="478" y="489" width="1" height="31" fill="#000"/><rect x="477" y="490" width="3" height="14" fill="#000"/><rect x="478" y="491" width="1" height="12" fill="#dc143c"/><rect x="482" y="484" width="1" height="36" fill="#000"/><rect x="481" y="485" width="3" height="19" fill="#000"/><rect x="482" y="486" width="1" height="17" fill="#4169e1"/><rect x="486" y="479" width="1" height="40" fill="#000"/><rect x="485" y="485" width="3" height="33" fill="#000"/><rect x="486" y="486" width="1" height="31" fill="#dc143c"/><rect x="490" y="518" width="1" height="24" fill="#000"/><rect x="489" y="519" width="3" height="9" fill="#000"/><rect x="490" y="520" width="1" height="7" fill="#dc143c"/><rect x="494" y="513" width="1" height="47" fill="#000"/><rect x="493" y="527" width="3" height="10" fill="#000"/><rect x="494" y="528" width="1" height="8" fill="#dc143c"/><rect x="498" y="536" width="1" height="25" fill="#000"/><rect x="497" y="538" width="3" height="18" fill="#000"/><rect x="498" y="539" width="1" height="16" fill="#dc143c"/><rect x="502" y="549" width="1" height="31" fill="#000"/><rect x="501" y="556" width="3" height="5" fill="#000"/><rect x="502" y="557" width="1" height="3" fill="#dc143c"/><rect x="506" y="551" width="1" height="32" fill="#000"/><rect x="505" y="561" width="3" height="5" fill="#000"/><rect x="506" y="562" width="1" height="3" fill="#dc143c"/><rect x="510" y="538" width="1" height="28" fill="#000"/><rect x="509" y="538" width="3" height="28" fill="#000"/><rect x="510" y="539" width="1" height="26" fill="#4169e1"/><rect x="514" y="530" width="1" height="16" fill="#000"/><rect x="513" y="540" width="3" height="1" fill="#000"/><rect x="518" y="513" width="1" height="41" fill="#000"/><rect x="517" y="522" width="3" height="20" fill="#000"/><rect x="518" y="523" width="1" height="18" fill="#4169e1"/><rect x="522" y="504" width="1" height="20" fill="#000"/><rect x="521" y="514" width="3" height="8" fill="#000"/><rect x="522" y="515" width="1" height="6" fill="#4169e1"/><rect x="526" y="513" width="1" height="28" fill="#000"/><rect x="525" y="515" width="3" height="19" fill="#000"/><rect x="526" y="516" width="1" height="17" fill="#dc143c"/><rect x="530" y="533" width="1" height="22" fill="#000"/><rect x="529" y="534" width="3" height="12" fill="#000"/><rect x="530" y="535" width="1" height="10" fill="#dc143c"/><rect x="534" y="538" width="1" height="13" fill="#000"/><rect x="533" y="544" width="3" height="5" fill="#000"/><rect x="534" y="545" width="1" height="3" fill="#dc143c"/><rect x="538" y="530" width="1" height="22" fill="#000"/><rect x="537" y="532" width="3" height="18" fill="#000"/><rect x="538" y="533" width="1" height="16" fill="#4169e1"/><rect x="542" y="526" width="1" height="11" fill="#000"/><rect x="541" y="528" width="3" height="4" fill="#000"/><rect x="542" y="529" width="1" height="2" fill="#4169e1"/><rect x="546" y="517" width="1" height="24" fill="#000"/><rect x="545" y="527" width="3" height="14" fill="#000"/><rect x="546" y="528" width="1" height="12" fill="#dc143c"/><rect x="550" y="524" width="1" height="18" fill="#000"/><rect x="549" y="525" width="3" height="16" fill="#000"/><rect x="550" y="526" width="1" height="14" fill="#4169e1"/><rect x="554" y="512" width="1" height="25" fill="#000"/><rect x="553" y="524" width="3" height="12" fill="#000"/><rect x="554" y="525" width="1" height="10" fill="#dc143c"/><rect x="558" y="522" width="1" height="18" fill="#000"/><rect x="557" y="525" width="3" height="8" fill="#000"/><rect x="558" y="526" width="1" height="6" fill="#4169e1"/><rect x="562" y="518" width="1" height="13" fill="#000"/><rect x="561" y="526" width="3" height="3" fill="#000"/><rect x="562" y="527" width="1" height="1" fill="#4169e1"/><rect x="566" y="510" width="1" height="69" fill="#000"/><rect x="565" y="526" width="3" height="30" fill="#000"/><rect x="566" y="527" width="1" height="28" fill="#dc143c"/><rect x="570" y="534" width="1" height="24" fill="#000"/><rect x="569" y="535" width="3" height="21" fill="#000"/><rect x="570" y="536" width="1" height="19" fill="#4169e1"/><rect x="574" y="522" width="1" height="15" fill="#000"/><rect x="573" y="524" width="3" height="12" fill="#000"/><rect x="574" y="525" width="1" height="10" fill="#4169e1"/><rect x="578" y="511" width="1" height="15" fill="#000"/><rect x="577" y="517" width="3" height="7" fill="#000"/><rect x="578" y="518" width="1" height="5" fill="#4169e1"/><rect x="582" y="503" width="1" height="15" fill="#000"/><rect x="581" y="503" width="3" height="14" fill="#000"/><rect x="582" y="504" width="1" height="12" fill="#4169e1"/><rect x="586" y="502" width="1" height="8" fill="#000"/><rect x="585" y="504" width="3" height="3" fill="#000"/><rect x="586" y="505" width="1" height="1" fill="#dc143c"/><rect x="590" y="506" width="1" height="16" fill="#000"/><rect x="589" y="507" width="3" height="14" fill="#000"/><rect x="590" y="508" width="1" height="12" fill="#dc143c"/><rect x="594" y="510" width="1" height="12" fill="#000"/><rect x="593" y="516" width="3" height="5" fill="#000"/><rect x="594" y="517" width="1" height="3" fill="#4169e1"/><rect x="598" y="517" width="1" height="20" fill="#000"/><rect x="597" y="517" width="3" height="17" fill="#000"/><rect x="598" y="518" width="1" height="15" fill="#dc143c"/><rect x="602" y="511" width="1" height="26" fill="#000"/><rect x="601" y="529" width="3" height="6" fill="#000"/><rect x="602" y="530" width="1" height="4" fill="#4169e1"/><rect x="606" y="511" width="1" height="21" fill="#000"/><rect x="605" y="530" width="3" height="1" fill="#000"/><rect x="610" y="508" width="1" height="28" fill="#000"/><rect x="609" y="509" width="3" height="20" fill="#000"/><rect x="610" y="510" width="1" height="18" fill="#4169e1"/><rect x="614" y="493" width="1" height="16" fill="#000"/><rect x="613" y="501" width="3" height="7" fill="#000"/><rect x="614" y="502" width="1" height="5" fill="#4169e1"/><rect x="618" y="490" width="1" height="27" fill="#000"/><rect x="617" y="501" width="3" height="5" fill="#000"/><rect x="618" y="502" width="1" height="3" fill="#dc143c"/><rect x="622" y="503" width="1" height="12" fill="#000"/><rect x="621" y="507" width="3" height="4" fill="#000"/><rect x="622" y="508" width="1" height="2" fill="#dc143c"/><rect x="626" y="510" width="1" height="12" fill="#000"/><rect x="625" y="511" width="3" height="10" fill="#000"/><rect x="626" y="512" width="1" height="8" fill="#dc143c"/><rect x="630" y="519" width="1" height="20" fill="#000"/><rect x="629" y="521" width="3" height="6" fill="#000"/><rect x="630" y="522" width="1" height="4" fill="#dc143c"/><rect x="634" y="521" width="1" height="9" fill="#000"/><rect x="633" y="525" width="3" height="4" fill="#000"/><rect x="634" y="526" width="1" height="2" fill="#dc143c"/><rect x="638" y="512" width="1" height="16" fill="#000"/><rect x="637" y="517" width="3" height="9" fill="#000"/><rect x="638" y="518" width="1" height="7" fill="#4169e1"/><rect x="642" y="505" width="1" height="23" fill="#000"/><rect x="641" y="517" width="3" height="4" fill="#000"/><rect x="642" y="518" width="1" height="2" fill="#dc143c"/><rect x="646" y="514" width="1" height="12" fill="#000"/><rect x="645" y="520" width="3" height="4" fill="#000"/><rect x="646" y="521" width="1" height="2" fill="#dc143c"/><rect x="650" y="517" width="1" height="13" fill="#000"/><rect x="649" y="524" width="3" height="1" fill="#000"/><rect x="654" y="514" width="1" height="31" fill="#000"/><rect x="653" y="524" width="3" height="19" fill="#000"/><rect x="654" y="525" width="1" height="17" fill="#dc143c"/><rect x="658" y="541" width="1" height="11" fill="#000"/><rect x="657" y="542" width="3" height="9" fill="#000"/><rect x="658" y="543" width="1" height="7" fill="#dc143c"/><rect x="662" y="544" width="1" height="12" fill="#000"/><rect x="661" y="550" width="3" height="4" fill="#000"/><rect x="662" y="551" width="1" height="2" fill="#dc143c"/><rect x="666" y="547" width="1" height="14" fill="#000"/><rect x="665" y="552" width="3" height="6" fill="#000"/><rect x="666" y="553" width="1" height="4" fill="#dc143c"/><rect x="670" y="555" width="1" height="17" fill="#000"/><rect x="669" y="561" width="3" height="1" fill="#000"/><rect x="674" y="558" width="1" height="15" fill="#000"/><rect x="673" y="562" width="3" height="8" fill="#000"/><rect x="674" y="563" width="1" height="6" fill="#dc143c"/><rect x="678" y="566" width="1" height="14" fill="#000"/><rect x="677" y="571" width="3" height="1" fill="#000"/><rect x="682" y="560" width="1" height="14" fill="#000"/><rect x="681" y="565" width="3" height="8" fill="#000"/><rect x="682" y="566" width="1" height="6" fill="#4169e1"/><rect x="686" y="555" width="1" height="12" fill="#000"/><rect x="685" y="556" width="3" height="9" fill="#000"/><rect x="686" y="557" width="1" height="7" fill="#4169e1"/><rect x="690" y="555" width="1" height="14" fill="#000"/><rect x="689" y="556" width="3" height="1" fill="#000"/><rect x="694" y="542" width="1" height="14" fill="#000"/><rect x="693" y="545" width="3" height="10" fill="#000"/><rect x="694" y="546" width="1" height="8" fill="#4169e1"/><rect x="698" y="536" width="1" height="19" fill="#000"/><rect x="697" y="537" width="3" height="11" fill="#000"/><rect x="698" y="538" width="1" height="9" fill="#4169e1"/><rect x="702" y="535" width="1" height="13" fill="#000"/><rect x="701" y="538" width="3" height="3" fill="#000"/><rect x="702" y="539" width="1" height="1" fill="#dc143c"/><rect x="706" y="541" width="1" height="6" fill="#000"/><rect x="705" y="546" width="3" height="1" fill="#000"/><rect x="710" y="544" width="1" height="14" fill="#000"/><rect x="709" y="546" width="3" height="12" fill="#000"/><rect x="710" y="547" width="1" height="10" fill="#dc143c"/><rect x="714" y="549" width="1" height="10" fill="#000"/><rect x="713" y="552" width="3" height="6" fill="#000"/><rect x="714" y="553" width="1" height="4" fill="#4169e1"/><rect x="718" y="551" width="1" height="7" fill="#000"/><rect x="717" y="555" width="3" height="1" fill="#000"/><rect x="722" y="545" width="1" height="11" fill="#000"/><rect x="721" y="546" width="3" height="9" fill="#000"/><rect x="722" y="547" width="1" height="7" fill="#4169e1"/><rect x="726" y="543" width="1" height="14" fill="#000"/><rect x="725" y="545" width="3" height="6" fill="#000"/><rect x="726" y="546" width="1" height="4" fill="#dc143c"/><rect x="730" y="549" width="1" height="10" fill="#000"/><rect x="729" y="551" width="3" height="1" fill="#000"/><rect x="734" y="547" width="1" height="7" fill="#000"/><rect x="733" y="549" width="3" height="4" fill="#000"/><rect x="734" y="550" width="1" height="2" fill="#4169e1"/><rect x="738" y="547" width="1" height="15" fill="#000"/><rect x="737" y="548" width="3" height="6" fill="#000"/><rect x="738" y="549" width="1" height="4" fill="#dc143c"/><rect x="742" y="543" width="1" height="14" fill="#000"/><rect x="741" y="550" width="3" height="1" fill="#000"/><rect x="746" y="552" width="1" height="11" fill="#000"/><rect x="745" y="554" width="3" height="7" fill="#000"/><rect x="746" y="555" width="1" height="5" fill="#dc143c"/><rect x="750" y="546" width="1" height="17" fill="#000"/><rect x="749" y="551" width="3" height="9" fill="#000"/><rect x="750" y="552" width="1" height="7" fill="#4169e1"/><rect x="754" y="544" width="1" height="8" fill="#000"/><rect x="753" y="545" width="3" height="6" fill="#000"/><rect x="754" y="546" width="1" height="4" fill="#4169e1"/><rect x="758" y="544" width="1" height="16" fill="#000"/><rect x="757" y="545" width="3" height="13" fill="#000"/><rect x="758" y="546" width="1" height="11" fill="#dc143c"/><rect x="762" y="552" width="1" height="13" fill="#000"/><rect x="761" y="558" width="3" height="6" fill="#000"/><rect x="762" y="559" width="1" height="4" fill="#dc143c"/><rect x="766" y="560" width="1" height="8" fill="#000"/><rect x="765" y="562" width="3" height="1" fill="#000"/><rect x="770" y="561" width="1" height="12" fill="#000"/><rect x="769" y="562" width="3" height="6" fill="#000"/><rect x="770" y="563" width="1" height="4" fill="#dc143c"/><rect x="774" y="554" width="1" height="14" fill="#000"/><rect x="773" y="555" width="3" height="11" fill="#000"/><rect x="774" y="556" width="1" height="9" fill="#4169e1"/><rect x="778" y="553" width="1" height="7" fill="#000"/><rect x="777" y="556" width="3" height="1" fill="#000"/><rect x="782" y="550" width="1" height="7" fill="#000"/><rect x="781" y="556" width="3" height="1" fill="#000"/><rect x="786" y="555" width="1" height="15" fill="#000"/><rect x="785" y="557" width="3" height="7" fill="#000"/><rect x="786" y="558" width="1" height="5" fill="#dc143c"/><rect x="790" y="561" width="1" height="11" fill="#000"/><rect x="789" y="566" width="3" height="4" fill="#000"/><rect x="790" y="567" width="1" height="2" fill="#dc143c"/><rect x="794" y="607" width="1" height="62" fill="#000"/><rect x="793" y="608" width="3" height="61" fill="#000"/><rect x="794" y="609" width="1" height="59" fill="#4169e1"/><rect x="798" y="607" width="1" height="19" fill="#000"/><rect x="797" y="612" width="3" height="9" fill="#000"/><rect x="798" y="613" width="1" height="7" fill="#4169e1"/><rect x="802" y="609" width="1" height="4" fill="#000"/><rect x="801" y="611" width="3" height="1" fill="#000"/><rect x="806" y="577" width="1" height="16" fill="#000"/><rect x="805" y="582" width="3" height="10" fill="#000"/><rect x="806" y="583" width="1" height="8" fill="#4169e1"/><rect x="810" y="571" width="1" height="40" fill="#000"/><rect x="809" y="582" width="3" height="28" fill="#000"/><rect x="810" y="583" width="1" height="26" fill="#dc143c"/><rect x="814" y="595" width="1" height="19" fill="#000"/><rect x="813" y="598" width="3" height="3" fill="#000"/><rect x="814" y="599" width="1" height="1" fill="#dc143c"/><rect x="818" y="595" width="1" height="21" fill="#000"/><rect x="817" y="601" width="3" height="5" fill="#000"/><rect x="818" y="602" width="1" height="3" fill="#dc143c"/><rect x="822" y="596" width="1" height="16" fill="#000"/><rect x="821" y="600" width="3" height="6" fill="#000"/><rect x="822" y="601" width="1" height="4" fill="#4169e1"/><rect x="826" y="575" width="1" height="28" fill="#000"/><rect x="825" y="585" width="3" height="16" fill="#000"/><rect x="826" y="586" width="1" height="14" fill="#4169e1"/><rect x="830" y="560" width="1" height="26" fill="#000"/><rect x="829" y="561" width="3" height="24" fill="#000"/><rect x="830" y="562" width="1" height="22" fill="#4169e1"/><rect x="834" y="555" width="1" height="9" fill="#000"/><rect x="833" y="557" width="3" height="3" fill="#000"/><rect x="834" y="558" width="1" height="1" fill="#4169e1"/><rect x="838" y="544" width="1" height="17" fill="#000"/><rect x="837" y="550" width="3" height="6" fill="#000"/><rect x="838" y="551" width="1" height="4" fill="#4169e1"/><rect x="842" y="536" width="1" height="31" fill="#000"/><rect x="841" y="545" width="3" height="1" fill="#000"/><rect x="846" y="541" width="1" height="7" fill="#000"/><rect x="845" y="542" width="3" height="5" fill="#000"/><rect x="846" y="543" width="1" height="3" fill="#dc143c"/><rect x="850" y="541" width="1" height="7" fill="#000"/><rect x="849" y="542" width="3" height="5" fill="#000"/><rect x="850" y="543" width="1" height="3" fill="#4169e1"/><rect x="854" y="534" width="1" height="11" fill="#000"/><rect x="853" y="543" width="3" height="1" fill="#000"/><rect x="858" y="540" width="1" height="5" fill="#000"/><rect x="857" y="544" width="3" height="1" fill="#000"/><rect x="862" y="539" width="1" height="5" fill="#000"/><rect x="861" y="542" width="3" height="1" fill="#000"/><rect x="866" y="537" width="1" height="8" fill="#000"/><rect x="865" y="542" width="3" height="1" fill="#000"/><rect x="870" y="541" width="1" height="13" fill="#000"/><rect x="869" y="542" width="3" height="1" fill="#000"/><rect x="874" y="532" width="1" height="10" fill="#000"/><rect x="873" y="533" width="3" height="8" fill="#000"/><rect x="874" y="534" width="1" height="6" fill="#4169e1"/><rect x="878" y="532" width="1" height="5" fill="#000"/><rect x="877" y="534" width="3" height="1" fill="#000"/><rect x="882" y="533" width="1" height="4" fill="#000"/><rect x="881" y="535" width="3" height="1" fill="#000"/><rect x="886" y="532" width="1" height="6" fill="#000"/><rect x="885" y="533" width="3" height="4" fill="#000"/><rect x="886" y="534" width="1" height="2" fill="#4169e1"/><rect x="890" y="528" width="1" height="16" fill="#000"/><rect x="889" y="532" width="3" height="11" fill="#000"/><rect x="890" y="533" width="1" height="9" fill="#dc143c"/><rect x="894" y="526" width="1" height="19" fill="#000"/><rect x="893" y="528" width="3" height="14" fill="#000"/><rect x="894" y="529" width="1" height="12" fill="#4169e1"/><rect x="898" y="520" width="1" height="16" fill="#000"/><rect x="897" y="528" width="3" height="1" fill="#000"/><rect x="902" y="521" width="1" height="11" fill="#000"/><rect x="901" y="526" width="3" height="4" fill="#000"/><rect x="902" y="527" width="1" height="2" fill="#dc143c"/><rect x="906" y="524" width="1" height="12" fill="#000"/><rect x="905" y="525" width="3" height="10" fill="#000"/><rect x="906" y="526" width="1" height="8" fill="#dc143c"/><rect x="910" y="529" width="1" height="7" fill="#000"/><rect x="909" y="530" width="3" height="5" fill="#000"/><rect x="910" y="531" width="1" height="3" fill="#4169e1"/><rect x="914" y="519" width="1" height="11" fill="#000"/><rect x="913" y="525" width="3" height="4" fill="#000"/><rect x="914" y="526" width="1" height="2" fill="#4169e1"/><rect x="918" y="520" width="1" height="13" fill="#000"/><rect x="917" y="522" width="3" height="3" fill="#000"/><rect x="918" y="523" width="1" height="1" fill="#4169e1"/><rect x="922" y="514" width="1" height="12" fill="#000"/><rect x="921" y="523" width="3" height="1" fill="#000"/><rect x="926" y="521" width="1" height="10" fill="#000"/><rect x="925" y="525" width="3" height="4" fill="#000"/><rect x="926" y="526" width="1" height="2" fill="#dc143c"/><rect x="930" y="520" width="1" height="25" fill="#000"/><rect x="929" y="527" width="3" height="4" fill="#000"/><rect x="930" y="528" width="1" height="2" fill="#dc143c"/><rect x="934" y="522" width="1" height="23" fill="#000"/><rect x="933" y="533" width="3" height="8" fill="#000"/><rect x="934" y="534" width="1" height="6" fill="#dc143c"/><rect x="938" y="535" width="1" height="8" fill="#000"/><rect x="937" y="538" width="3" height="3" fill="#000"/><rect x="938" y="539" width="1" height="1" fill="#4169e1"/><rect x="942" y="536" width="1" height="17" fill="#000"/><rect x="941" y="537" width="3" height="15" fill="#000"/><rect x="942" y="538" width="1" height="13" fill="#dc143c"/><rect x="946" y="549" width="1" height="26" fill="#000"/><rect x="945" y="550" width="3" height="15" fill="#000"/><rect x="946" y="551" width="1" height="13" fill="#dc143c"/><rect x="950" y="560" width="1" height="13" fill="#000"/><rect x="949" y="566" width="3" height="1" fill="#000"/><rect x="954" y="564" width="1" height="8" fill="#000"/><rect x="953" y="566" width="3" height="4" fill="#000"/><rect x="954" y="567" width="1" height="2" fill="#dc143c"/><rect x="958" y="567" width="1" height="14" fill="#000"/><rect x="957" y="569" width="3" height="5" fill="#000"/><rect x="958" y="570" width="1" height="3" fill="#dc143c"/><rect x="962" y="564" width="1" height="13" fill="#000"/><rect x="961" y="574" width="3" height="1" fill="#000"/><rect x="966" y="561" width="1" height="15" fill="#000"/><rect x="965" y="562" width="3" height="13" fill="#000"/><rect x="966" y="563" width="1" height="11" fill="#4169e1"/><rect x="970" y="557" width="1" height="7" fill="#000"/><rect x="969" y="562" width="3" height="1" fill="#000"/><rect x="974" y="538" width="1" height="25" fill="#000"/><rect x="973" y="539" width="3" height="23" fill="#000"/><rect x="974" y="540" width="1" height="21" fill="#4169e1"/><rect x="978" y="532" width="1" height="8" fill="#000"/><rect x="977" y="538" width="3" height="1" fill="#000"/><rect x="982" y="529" width="1" height="14" fill="#000"/><rect x="981" y="531" width="3" height="6" fill="#000"/><rect x="982" y="532" width="1" height="4" fill="#4169e1"/><rect x="986" y="525" width="1" height="12" fill="#000"/><rect x="985" y="528" width="3" height="3" fill="#000"/><rect x="986" y="529" width="1" height="1" fill="#4169e1"/><rect x="990" y="527" width="1" height="10" fill="#000"/><rect x="989" y="530" width="3" height="6" fill="#000"/><rect x="990" y="531" width="1" height="4" fill="#dc143c"/><rect x="994" y="534" width="1" height="10" fill="#000"/><rect x="993" y="536" width="3" height="1" fill="#000"/><rect x="998" y="529" width="1" height="12" fill="#000"/><rect x="997" y="540" width="3" height="1" fill="#000"/><rect x="1002" y="529" width="1" height="13" fill="#000"/><rect x="1001" y="539" width="3" height="1" fill="#000"/><rect x="1006" y="535" width="1" height="15" fill="#000"/><rect x="1005" y="536" width="3" height="5" fill="#000"/><rect x="1006" y="537" width="1" height="3" fill="#4169e1"/><rect x="1010" y="530" width="1" height="13" fill="#000"/><rect x="1009" y="538" width="3" height="1" fill="#000"/><rect x="1014" y="534" width="1" height="8" fill="#000"/><rect x="1013" y="536" width="3" height="3" fill="#000"/><rect x="1014" y="537" width="1" height="1" fill="#4169e1"/><rect x="1018" y="534" width="1" height="5" fill="#000"/><rect x="1017" y="535" width="3" height="3" fill="#000"/><rect x="1018" y="536" width="1" height="1" fill="#dc143c"/><rect x="1022" y="510" width="1" height="28" fill="#000"/><rect x="1021" y="512" width="3" height="25" fill="#000"/><rect x="1022" y="513" width="1" height="23" fill="#4169e1"/><rect x="1026" y="511" width="1" height="9" fill="#000"/><rect x="1025" y="513" width="3" height="3" fill="#000"/><rect x="1026" y="514" width="1" height="1" fill="#dc143c"/><rect x="1030" y="510" width="1" height="7" fill="#000"/><rect x="1029" y="512" width="3" height="3" fill="#000"/><rect x="1030" y="513" width="1" height="1" fill="#4169e1"/><rect x="1034" y="512" width="1" height="17" fill="#000"/><rect x="1033" y="513" width="3" height="14" fill="#000"/><rect x="1034" y="514" width="1" height="12" fill="#dc143c"/><rect x="1038" y="516" width="1" height="15" fill="#000"/><rect x="1037" y="517" width="3" height="10" fill="#000"/><rect x="1038" y="518" width="1" height="8" fill="#4169e1"/><rect x="1042" y="514" width="1" height="10" fill="#000"/><rect x="1041" y="516" width="3" height="1" fill="#000"/><rect x="1046" y="514" width="1" height="9" fill="#000"/><rect x="1045" y="516" width="3" height="1" fill="#000"/><rect x="1050" y="517" width="1" height="6" fill="#000"/><rect x="1049" y="520" width="3" height="1" fill="#000"/><rect x="1054" y="520" width="1" height="8" fill="#000"/><rect x="1053" y="521" width="3" height="6" fill="#000"/><rect x="1054" y="522" width="1" height="4" fill="#dc143c"/><rect x="1058" y="517" width="1" height="17" fill="#000"/><rect x="1057" y="531" width="3" height="1" fill="#000"/><rect x="1062" y="524" width="1" height="12" fill="#000"/><rect x="1061" y="532" width="3" height="1" fill="#000"/><rect x="1066" y="525" width="1" height="9" fill="#000"/><rect x="1065" y="532" width="3" height="1" fill="#000"/><rect x="1070" y="529" width="1" height="6" fill="#000"/><rect x="1069" y="531" width="3" height="3" fill="#000"/><rect x="1070" y="532" width="1" height="1" fill="#dc143c"/><rect x="1074" y="530" width="1" height="6" fill="#000"/><rect x="1073" y="533" width="3" height="1" fill="#000"/><rect x="1078" y="526" width="1" height="6" fill="#000"/><rect x="1077" y="527" width="3" height="4" fill="#000"/><rect x="1078" y="528" width="1" height="2" fill="#4169e1"/><rect x="1082" y="519" width="1" height="9" fill="#000"/><rect x="1081" y="519" width="3" height="5" fill="#000"/><rect x="1082" y="520" width="1" height="3" fill="#4169e1"/><rect x="1086" y="519" width="1" height="6" fill="#000"/><rect x="1085" y="522" width="3" height="1" fill="#000"/><rect x="1090" y="521" width="1" height="6" fill="#000"/><rect x="1089" y="525" width="3" height="1" fill="#000"/><rect x="1094" y="521" width="1" height="6" fill="#000"/><rect x="1093" y="525" width="3" height="1" fill="#000"/><rect x="1098" y="519" width="1" height="11" fill="#000"/><rect x="1097" y="524" width="3" height="6" fill="#000"/><rect x="1098" y="525" width="1" height="4" fill="#dc143c"/><rect x="1102" y="526" width="1" height="13" fill="#000"/><rect x="1101" y="528" width="3" height="9" fill="#000"/><rect x="1102" y="529" width="1" height="7" fill="#dc143c"/><rect x="1106" y="535" width="1" height="10" fill="#000"/><rect x="1105" y="542" width="3" height="1" fill="#000"/><rect x="1110" y="523" width="1" height="21" fill="#000"/><rect x="1109" y="523" width="3" height="20" fill="#000"/><rect x="1110" y="524" width="1" height="18" fill="#4169e1"/><rect x="1114" y="520" width="1" height="11" fill="#000"/><rect x="1113" y="521" width="3" height="1" fill="#000"/><rect x="1118" y="521" width="1" height="7" fill="#000"/><rect x="1117" y="522" width="3" height="4" fill="#000"/><rect x="1118" y="523" width="1" height="2" fill="#dc143c"/><rect x="1122" y="522" width="1" height="12" fill="#000"/><rect x="1121" y="525" width="3" height="5" fill="#000"/><rect x="1122" y="526" width="1" height="3" fill="#dc143c"/><rect x="1126" y="523" width="1" height="11" fill="#000"/><rect x="1125" y="529" width="3" height="3" fill="#000"/><rect x="1126" y="530" width="1" height="1" fill="#4169e1"/><rect x="1130" y="520" width="1" height="7" fill="#000"/><rect x="1129" y="522" width="3" height="4" fill="#000"/><rect x="1130" y="523" width="1" height="2" fill="#4169e1"/><rect x="1134" y="517" width="1" height="9" fill="#000"/><rect x="1133" y="519" width="3" height="6" fill="#000"/><rect x="1134" y="520" width="1" height="4" fill="#4169e1"/><rect x="1138" y="512" width="1" height="13" fill="#000"/><rect x="1137" y="512" width="3" height="7" fill="#000"/><rect x="1138" y="513" width="1" height="5" fill="#4169e1"/><rect x="1142" y="508" width="1" height="12" fill="#000"/><rect x="1141" y="513" width="3" height="4" fill="#000"/><rect x="1142" y="514" width="1" height="2" fill="#dc143c"/><rect x="1146" y="508" width="1" height="11" fill="#000"/><rect x="1145" y="512" width="3" height="5" fill="#000"/><rect x="1146" y="513" width="1" height="3" fill="#4169e1"/><rect x="1150" y="505" width="1" height="8" fill="#000"/><rect x="1149" y="506" width="3" height="6" fill="#000"/><rect x="1150" y="507" width="1" height="4" fill="#4169e1"/><rect x="1154" y="506" width="1" height="17" fill="#000"/><rect x="1153" y="507" width="3" height="14" fill="#000"/><rect x="1154" y="508" width="1" height="12" fill="#dc143c"/><rect x="1158" y="515" width="1" height="7" fill="#000"/><rect x="1157" y="520" width="3" height="1" fill="#000"/><rect x="1162" y="496" width="1" height="25" fill="#000"/><rect x="1161" y="507" width="3" height="14" fill="#000"/><rect x="1162" y="508" width="1" height="12" fill="#4169e1"/><rect x="1166" y="496" width="1" height="17" fill="#000"/><rect x="1165" y="504" width="3" height="3" fill="#000"/><rect x="1166" y="505" width="1" height="1" fill="#4169e1"/><rect x="1170" y="492" width="1" height="17" fill="#000"/><rect x="1169" y="493" width="3" height="11" fill="#000"/><rect x="1170" y="494" width="1" height="9" fill="#4169e1"/><rect x="1174" y="483" width="1" height="15" fill="#000"/><rect x="1173" y="489" width="3" height="5" fill="#000"/><rect x="1174" y="490" width="1" height="3" fill="#4169e1"/><rect x="1178" y="474" width="1" height="17" fill="#000"/><rect x="1177" y="484" width="3" height="7" fill="#000"/><rect x="1178" y="485" width="1" height="5" fill="#4169e1"/><rect x="1182" y="470" width="1" height="22" fill="#000"/><rect x="1181" y="471" width="3" height="14" fill="#000"/><rect x="1182" y="472" width="1" height="12" fill="#4169e1"/><rect x="1186" y="451" width="1" height="23" fill="#000"/><rect x="1185" y="455" width="3" height="18" fill="#000"/><rect x="1186" y="456" width="1" height="16" fill="#4169e1"/><rect x="1190" y="441" width="1" height="21" fill="#000"/><rect x="1189" y="451" width="3" height="5" fill="#000"/><rect x="1190" y="452" width="1" height="3" fill="#4169e1"/><rect x="1194" y="411" width="1" height="42" fill="#000"/><rect x="1193" y="418" width="3" height="34" fill="#000"/><rect x="1194" y="419" width="1" height="32" fill="#4169e1"/><rect x="1198" y="411" width="1" height="14" fill="#000"/><rect x="1197" y="414" width="3" height="4" fill="#000"/><rect x="1198" y="415" width="1" height="2" fill="#4169e1"/><rect x="1202" y="411" width="1" height="17" fill="#000"/><rect x="1201" y="413" width="3" height="3" fill="#000"/><rect x="1202" y="414" width="1" height="1" fill="#dc143c"/><rect x="1206" y="409" width="1" height="16" fill="#000"/><rect x="1205" y="418" width="3" height="1" fill="#000"/><rect x="1210" y="416" width="1" height="10" fill="#000"/><rect x="1209" y="420" width="3" height="1" fill="#000"/><rect x="1214" y="401" width="1" height="28" fill="#000"/><rect x="1213" y="420" width="3" height="3" fill="#000"/><rect x="1214" y="421" width="1" height="1" fill="#dc143c"/><rect x="1218" y="404" width="1" height="21" fill="#000"/><rect x="1217" y="417" width="3" height="7" fill="#000"/><rect x="1218" y="418" width="1" height="5" fill="#4169e1"/><rect x="1222" y="415" width="1" height="12" fill="#000"/><rect x="1221" y="418" width="3" height="5" fill="#000"/><rect x="1222" y="419" width="1" height="3" fill="#dc143c"/><rect x="1226" y="386" width="1" height="37" fill="#000"/><rect x="1225" y="400" width="3" height="22" fill="#000"/><rect x="1226" y="401" width="1" height="20" fill="#4169e1"/><rect x="1230" y="370" width="1" height="41" fill="#000"/><rect x="1229" y="372" width="3" height="28" fill="#000"/><rect x="1230" y="373" width="1" height="26" fill="#4169e1"/><rect x="1234" y="369" width="1" height="21" fill="#000"/><rect x="1233" y="372" width="3" height="16" fill="#000"/><rect x="1234" y="373" width="1" height="14" fill="#dc143c"/><rect x="1238" y="386" width="1" height="22" fill="#000"/><rect x="1237" y="390" width="3" height="1" fill="#000"/><rect x="1242" y="389" width="1" height="70" fill="#000"/><rect x="1241" y="389" width="3" height="66" fill="#000"/><rect x="1242" y="390" width="1" height="64" fill="#dc143c"/><rect x="1246" y="451" width="1" height="28" fill="#000"/><rect x="1245" y="460" width="3" height="10" fill="#000"/><rect x="1246" y="461" width="1" height="8" fill="#dc143c"/><rect x="1250" y="416" width="1" height="50" fill="#000"/><rect x="1249" y="417" width="3" height="48" fill="#000"/><rect x="1250" y="418" width="1" height="46" fill="#4169e1"/><rect x="1254" y="395" width="1" height="36" fill="#000"/><rect x="1253" y="401" width="3" height="17" fill="#000"/><rect x="1254" y="402" width="1" height="15" fill="#4169e1"/><rect x="1258" y="375" width="1" height="34" fill="#000"/><rect x="1257" y="381" width="3" height="20" fill="#000"/><rect x="1258" y="382" width="1" height="18" fill="#4169e1"/><rect x="1262" y="377" width="1" height="18" fill="#000"/><rect x="1261" y="381" width="3" height="11" fill="#000"/><rect x="1262" y="382" width="1" height="9" fill="#dc143c"/><rect x="1266" y="366" width="1" height="26" fill="#000"/><rect x="1265" y="372" width="3" height="20" fill="#000"/><rect x="1266" y="373" width="1" height="18" fill="#4169e1"/><rect x="1270" y="360" width="1" height="31" fill="#000"/><rect x="1269" y="372" width="3" height="6" fill="#000"/><rect x="1270" y="373" width="1" height="4" fill="#dc143c"/><rect x="1274" y="313" width="1" height="65" fill="#000"/><rect x="1273" y="317" width="3" height="60" fill="#000"/><rect x="1274" y="318" width="1" height="58" fill="#4169e1"/><rect x="1278" y="306" width="1" height="24" fill="#000"/><rect x="1277" y="315" width="3" height="1" fill="#000"/><rect x="1282" y="269" width="1" height="45" fill="#000"/><rect x="1281" y="309" width="3" height="5" fill="#000"/><rect x="1282" y="310" width="1" height="3" fill="#4169e1"/><rect x="1286" y="263" width="1" height="63" fill="#000"/><rect x="1285" y="269" width="3" height="38" fill="#000"/><rect x="1286" y="270" width="1" height="36" fill="#4169e1"/><rect x="1290" y="247" width="1" height="74" fill="#000"/><rect x="1289" y="269" width="3" height="41" fill="#000"/><rect x="1290" y="270" width="1" height="39" fill="#dc143c"/><rect x="1294" y="252" width="1" height="61" fill="#000"/><rect x="1293" y="277" width="3" height="33" fill="#000"/><rect x="1294" y="278" width="1" height="31" fill="#4169e1"/><rect x="1298" y="243" width="1" height="44" fill="#000"/><rect x="1297" y="273" width="3" height="4" fill="#000"/><rect x="1298" y="274" width="1" height="2" fill="#4169e1"/><rect x="1302" y="272" width="1" height="54" fill="#000"/><rect x="1301" y="273" width="3" height="35" fill="#000"/><rect x="1302" y="274" width="1" height="33" fill="#dc143c"/><rect x="1306" y="290" width="1" height="24" fill="#000"/><rect x="1305" y="291" width="3" height="18" fill="#000"/><rect x="1306" y="292" width="1" height="16" fill="#4169e1"/><rect x="1310" y="283" width="1" height="47" fill="#000"/><rect x="1309" y="291" width="3" height="23" fill="#000"/><rect x="1310" y="292" width="1" height="21" fill="#dc143c"/><rect x="1314" y="237" width="1" height="80" fill="#000"/><rect x="1313" y="262" width="3" height="52" fill="#000"/><rect x="1314" y="263" width="1" height="50" fill="#4169e1"/><rect x="1318" y="241" width="1" height="58" fill="#000"/><rect x="1317" y="263" width="3" height="17" fill="#000"/><rect x="1318" y="264" width="1" height="15" fill="#dc143c"/><rect x="1322" y="275" width="1" height="41" fill="#000"/><rect x="1321" y="275" width="3" height="5" fill="#000"/><rect x="1322" y="276" width="1" height="3" fill="#4169e1"/><rect x="1326" y="251" width="1" height="26" fill="#000"/><rect x="1325" y="252" width="3" height="22" fill="#000"/><rect x="1326" y="253" width="1" height="20" fill="#4169e1"/><rect x="1330" y="211" width="1" height="46" fill="#000"/><rect x="1329" y="219" width="3" height="34" fill="#000"/><rect x="1330" y="220" width="1" height="32" fill="#4169e1"/><rect x="1334" y="201" width="1" height="45" fill="#000"/><rect x="1333" y="218" width="3" height="1" fill="#000"/><rect x="1338" y="191" width="1" height="29" fill="#000"/><rect x="1337" y="195" width="3" height="24" fill="#000"/><rect x="1338" y="196" width="1" height="22" fill="#4169e1"/><rect x="1342" y="174" width="1" height="39" fill="#000"/><rect x="1341" y="180" width="3" height="15" fill="#000"/><rect x="1342" y="181" width="1" height="13" fill="#4169e1"/><rect x="1346" y="176" width="1" height="17" fill="#000"/><rect x="1345" y="181" width="3" height="1" fill="#000"/><rect x="1350" y="143" width="1" height="39" fill="#000"/><rect x="1349" y="156" width="3" height="25" fill="#000"/><rect x="1350" y="157" width="1" height="23" fill="#4169e1"/><rect x="1354" y="137" width="1" height="31" fill="#000"/><rect x="1353" y="141" width="3" height="16" fill="#000"/><rect x="1354" y="142" width="1" height="14" fill="#4169e1"/><rect x="1358" y="130" width="1" height="18" fill="#000"/><rect x="1357" y="142" width="3" height="1" fill="#000"/><rect x="1362" y="139" width="1" height="37" fill="#000"/><rect x="1361" y="142" width="3" height="33" fill="#000"/><rect x="1362" y="143" width="1" height="31" fill="#dc143c"/><rect x="1366" y="154" width="1" height="38" fill="#000"/><rect x="1365" y="175" width="3" height="8" fill="#000"/><rect x="1366" y="176" width="1" height="6" fill="#dc143c"/><rect x="1370" y="166" width="1" height="31" fill="#000"/><rect x="1369" y="171" width="3" height="12" fill="#000"/><rect x="1370" y="172" width="1" height="10" fill="#4169e1"/><rect x="1374" y="145" width="1" height="31" fill="#000"/><rect x="1373" y="159" width="3" height="13" fill="#000"/><rect x="1374" y="160" width="1" height="11" fill="#4169e1"/><rect x="1378" y="157" width="1" height="22" fill="#000"/><rect x="1377" y="158" width="3" height="12" fill="#000"/><rect x="1378" y="159" width="1" height="10" fill="#dc143c"/><rect x="1382" y="170" width="1" height="21" fill="#000"/><rect x="1381" y="171" width="3" height="19" fill="#000"/><rect x="1382" y="172" width="1" height="17" fill="#dc143c"/><rect x="1386" y="178" width="1" height="20" fill="#000"/><rect x="1385" y="189" width="3" height="7" fill="#000"/><rect x="1386" y="190" width="1" height="5" fill="#dc143c"/><rect x="1390" y="186" width="1" height="14" fill="#000"/><rect x="1389" y="189" width="3" height="4" fill="#000"/><rect x="1390" y="190" width="1" height="2" fill="#4169e1"/><rect x="1394" y="185" width="1" height="14" fill="#000"/><rect x="1393" y="190" width="3" height="1" fill="#000"/><rect x="1398" y="190" width="1" height="36" fill="#000"/><rect x="1397" y="191" width="3" height="31" fill="#000"/><rect x="1398" y="192" width="1" height="29" fill="#dc143c"/><rect x="1402" y="212" width="1" height="21" fill="#000"/><rect x="1401" y="217" width="3" height="5" fill="#000"/><rect x="1402" y="218" width="1" height="3" fill="#4169e1"/><rect x="1406" y="214" width="1" height="24" fill="#000"/><rect x="1405" y="216" width="3" height="20" fill="#000"/><rect x="1406" y="217" width="1" height="18" fill="#dc143c"/><rect x="1410" y="224" width="1" height="23" fill="#000"/><rect x="1409" y="229" width="3" height="6" fill="#000"/><rect x="1410" y="230" width="1" height="4" fill="#4169e1"/><rect x="1414" y="223" width="1" height="24" fill="#000"/><rect x="1413" y="229" width="3" height="1" fill="#000"/><rect x="1418" y="217" width="1" height="18" fill="#000"/><rect x="1417" y="228" width="3" height="1" fill="#000"/><rect x="1422" y="191" width="1" height="49" fill="#000"/><rect x="1421" y="192" width="3" height="38" fill="#000"/><rect x="1422" y="193" width="1" height="36" fill="#4169e1"/><rect x="1426" y="188" width="1" height="24" fill="#000"/><rect x="1425" y="195" width="3" height="6" fill="#000"/><rect x="1426" y="196" width="1" height="4" fill="#dc143c"/><rect x="1430" y="199" width="1" height="19" fill="#000"/><rect x="1429" y="201" width="3" height="15" fill="#000"/><rect x="1430" y="202" width="1" height="13" fill="#dc143c"/><rect x="1434" y="197" width="1" height="25" fill="#000"/><rect x="1433" y="199" width="3" height="17" fill="#000"/><rect x="1434" y="200" width="1" height="15" fill="#4169e1"/><rect x="1438" y="197" width="1" height="33" fill="#000"/><rect x="1437" y="199" width="3" height="26" fill="#000"/><rect x="1438" y="200" width="1" height="24" fill="#dc143c"/><rect x="1442" y="216" width="1" height="14" fill="#000"/><rect x="1441" y="226" width="3" height="1" fill="#000"/><rect x="1446" y="222" width="1" height="17" fill="#000"/><rect x="1445" y="227" width="3" height="11" fill="#000"/><rect x="1446" y="228" width="1" height="9" fill="#dc143c"/><rect x="1450" y="239" width="1" height="33" fill="#000"/><rect x="1449" y="240" width="3" height="31" fill="#000"/><rect x="1450" y="241" width="1" height="29" fill="#dc143c"/><rect x="1454" y="266" width="1" height="7" fill="#000"/><rect x="1453" y="269" width="3" height="3" fill="#000"/><rect x="1454" y="270" width="1" height="1" fill="#dc143c"/></g><line x1="1431" y1="209" x2="1455" y2="269" stroke="#ff0000" stroke-width="1.2" stroke-dasharray="2 2"/><g shape-rendering="crispEdges"><rect x="1828" y="116" width="4" height="1" fill="#000"/><rect x="1828" y="166" width="4" height="1" fill="#000"/><rect x="1828" y="216" width="4" height="1" fill="#000"/><rect x="1828" y="266" width="4" height="1" fill="#000"/><rect x="1828" y="316" width="4" height="1" fill="#000"/><rect x="1828" y="366" width="4" height="1" fill="#000"/><rect x="1828" y="416" width="4" height="1" fill="#000"/><rect x="1828" y="466" width="4" height="1" fill="#000"/><rect x="1828" y="516" width="4" height="1" fill="#000"/><rect x="1828" y="566" width="4" height="1" fill="#000"/><rect x="1828" y="616" width="4" height="1" fill="#000"/><rect x="1828" y="666" width="4" height="1" fill="#000"/><rect x="94" y="687" width="1" height="4" fill="#000"/><rect x="190" y="687" width="1" height="4" fill="#000"/><rect x="286" y="687" width="1" height="4" fill="#000"/><rect x="382" y="687" width="1" height="4" fill="#000"/><rect x="478" y="687" width="1" height="4" fill="#000"/><rect x="574" y="687" width="1" height="4" fill="#000"/><rect x="670" y="687" width="1" height="4" fill="#000"/><rect x="766" y="687" width="1" height="4" fill="#000"/><rect x="862" y="687" width="1" height="4" fill="#000"/><rect x="958" y="687" width="1" height="4" fill="#000"/><rect x="1054" y="687" width="1" height="4" fill="#000"/><rect x="1150" y="687" width="1" height="4" fill="#000"/><rect x="1246" y="687" width="1" height="4" fill="#000"/><rect x="1342" y="687" width="1" height="4" fill="#000"/><rect x="1438" y="687" width="1" height="4" fill="#000"/><polygon points="1454,96 1466,96 1460,102" fill="#778899"/><rect x="1451" y="405" width="7" height="1" fill="#0000ff"/></g></svg>
<div class="t f" style="left:1834px;top:111px;font-size:12.5px;transform:scaleX(1.0262);transform-origin:0 0">0.88110</div>
<div class="t f" style="left:1834px;top:161px;font-size:12.5px;transform:scaleX(1.0048);transform-origin:0 0">0.88060</div>
<div class="t f" style="left:1834px;top:211px;font-size:12.5px;transform:scaleX(1.0048);transform-origin:0 0">0.88010</div>
<div class="t f" style="left:1834px;top:261px;font-size:12.5px;transform:scaleX(1.0048);transform-origin:0 0">0.87960</div>
<div class="t f" style="left:1834px;top:311px;font-size:12.5px;transform:scaleX(1.0048);transform-origin:0 0">0.87910</div>
<div class="t f" style="left:1834px;top:361px;font-size:12.5px;transform:scaleX(1.0048);transform-origin:0 0">0.87860</div>
<div class="t f" style="left:1834px;top:411px;font-size:12.5px;transform:scaleX(1.0048);transform-origin:0 0">0.87810</div>
<div class="t f" style="left:1834px;top:461px;font-size:12.5px;transform:scaleX(1.0048);transform-origin:0 0">0.87760</div>
<div class="t f" style="left:1834px;top:511px;font-size:12.5px;transform:scaleX(1.0048);transform-origin:0 0">0.87710</div>
<div class="t f" style="left:1834px;top:561px;font-size:12.5px;transform:scaleX(1.0048);transform-origin:0 0">0.87660</div>
<div class="t f" style="left:1834px;top:611px;font-size:12.5px;transform:scaleX(1.0048);transform-origin:0 0">0.87610</div>
<div class="t f" style="left:1834px;top:661px;font-size:12.5px;transform:scaleX(1.0048);transform-origin:0 0">0.87560</div>
<div class="a" style="left:1829px;top:203px;width:56px;height:14px;background:#a52a2a"></div>
<div class="t f" style="left:1834px;top:205px;font-size:12.5px;color:#fff;transform:scaleX(1.0048);transform-origin:0 0">0.88017</div>
<div class="a" style="left:1829px;top:220px;width:56px;height:14px;background:#808080"></div>
<div class="t f" style="left:1834px;top:222px;font-size:12.5px;color:#fff;transform:scaleX(1.0048);transform-origin:0 0">0.88000</div>
<div class="a" style="left:1829px;top:265px;width:56px;height:14px;background:#000"></div>
<div class="t f" style="left:1834px;top:267px;font-size:12.5px;color:#fff;transform:scaleX(1.0048);transform-origin:0 0">0.87954</div>
<div class="t f" style="left:-4px;top:692px;font-size:12.5px;transform:scaleX(0.9692);transform-origin:0 0">3 Nov 2025</div>
<div class="t f" style="left:92.5px;top:692px;font-size:12.5px;transform:scaleX(1.0147);transform-origin:0 0">3 Nov 09:25</div>
<div class="t f" style="left:188.5px;top:692px;font-size:12.5px;transform:scaleX(1.0293);transform-origin:0 0">3 Nov 11:25</div>
<div class="t f" style="left:284.5px;top:692px;font-size:12.5px;transform:scaleX(1.0147);transform-origin:0 0">3 Nov 13:25</div>
<div class="t f" style="left:380.5px;top:692px;font-size:12.5px;transform:scaleX(1.0147);transform-origin:0 0">3 Nov 15:25</div>
<div class="t f" style="left:476.5px;top:692px;font-size:12.5px;transform:scaleX(1.0147);transform-origin:0 0">3 Nov 17:25</div>
<div class="t f" style="left:572.5px;top:692px;font-size:12.5px;transform:scaleX(1.0147);transform-origin:0 0">3 Nov 19:25</div>
<div class="t f" style="left:668.5px;top:692px;font-size:12.5px;transform:scaleX(1.0147);transform-origin:0 0">3 Nov 21:25</div>
<div class="t f" style="left:764.5px;top:692px;font-size:12.5px;transform:scaleX(1.0147);transform-origin:0 0">3 Nov 23:25</div>
<div class="t f" style="left:860.5px;top:692px;font-size:12.5px;transform:scaleX(1.0147);transform-origin:0 0">4 Nov 01:25</div>
<div class="t f" style="left:956.5px;top:692px;font-size:12.5px;transform:scaleX(1.0147);transform-origin:0 0">4 Nov 03:25</div>
<div class="t f" style="left:1052.5px;top:692px;font-size:12.5px;transform:scaleX(1.0147);transform-origin:0 0">4 Nov 05:25</div>
<div class="t f" style="left:1148.5px;top:692px;font-size:12.5px;transform:scaleX(1.0147);transform-origin:0 0">4 Nov 07:25</div>
<div class="t f" style="left:1244.5px;top:692px;font-size:12.5px;transform:scaleX(1.0147);transform-origin:0 0">4 Nov 09:25</div>
<div class="t f" style="left:1340.5px;top:692px;font-size:12.5px;transform:scaleX(1.0293);transform-origin:0 0">4 Nov 11:25</div>
<div class="t f" style="left:1436.5px;top:692px;font-size:12.5px;transform:scaleX(1.0147);transform-origin:0 0">4 Nov 13:25</div>
<svg class="a" style="left:0;top:101px" width="12" height="8"><path d="M1,7 L5.5,1.5 L10,7 Z" fill="#000"/></svg>
<div class="t f" style="left:16px;top:100px;font-size:12.5px;transform:scaleX(0.8899);transform-origin:0 0">EURGBP,M5</div>
<div class="t f" style="left:6.5px;top:193px;font-size:12.5px;transform:scaleX(1.0035);transform-origin:0 0">#77239989 sell 0.07</div>
<div class="t f" style="left:6.5px;top:393px;font-size:12.5px;transform:scaleX(1.0468);transform-origin:0 0">#77239989 tp</div>
<div class="t f" style="left:414.5px;top:212px;font-size:19.5px;color:#a01c1c;transform:scaleX(0.9951);transform-origin:0 0">Break Even Line</div>
<div class="t f" style="left:1708px;top:101px;font-size:12.5px;color:#000033;transform:scaleX(0.9541);transform-origin:0 0">ProController-V33</div>
<svg class="a" style="left:1808px;top:99px" width="15" height="15" viewBox="0 0 15 15"><circle cx="7.4" cy="7.4" r="6.3" fill="none" stroke="#000033" stroke-width="1.1"/><circle cx="5.3" cy="5.6" r="0.95" fill="#000033"/><circle cx="9.5" cy="5.6" r="0.95" fill="#000033"/><path d="M4.2,8.6 q3.2,3.2 6.4,0" fill="none" stroke="#000033" stroke-width="1.1"/></svg>
<div class="a" style="left:1px;top:118px;width:60px;height:28px;background:linear-gradient(#5a5aff,#3c3cf0)"></div>
<div class="t f" style="left:14.5px;top:124px;font-size:15px;color:#fff;transform:scaleX(0.8403);transform-origin:0 0">SELL</div>
<div class="a" style="left:192px;top:118px;width:60px;height:28px;background:linear-gradient(#5a5aff,#3c3cf0)"></div>
<div class="t f" style="left:208.5px;top:124px;font-size:15px;color:#fff;transform:scaleX(0.8712);transform-origin:0 0">BUY</div>
<div class="a" style="left:1px;top:145px;width:125px;height:45px;background:linear-gradient(#3c3cf0,#0000c0)"></div>
<div class="a" style="left:128px;top:145px;width:124px;height:45px;background:linear-gradient(#3c3cf0,#0000c0)"></div>
<div class="a" style="left:5px;top:145px;width:52px;height:1px;background:#8080ff"></div>
<div class="a" style="left:196px;top:145px;width:52px;height:1px;background:#8080ff"></div>
<div class="a" style="left:63px;top:118px;width:128px;height:25px;background:#fff;border:1px solid #c8c8c8"></div>
<div class="a" style="left:63px;top:118px;width:24px;height:25px;background:#f4f4f4;border:1px solid #c8c8c8"></div>
<div class="a" style="left:166px;top:118px;width:25px;height:25px;background:#f4f4f4;border:1px solid #c8c8c8"></div>
<svg class="a" style="left:72px;top:127px" width="10" height="8"><path d="M0.8,1.2 H8.2 L4.5,6 Z" fill="#000"/></svg>
<svg class="a" style="left:173px;top:127px" width="10" height="8"><path d="M0.8,5.8 H8.2 L4.5,1 Z" fill="#000"/></svg>
<div class="t" style="left:127px;top:123px;font-size:14px;width:36px;text-align:right">0.07</div>
<div class="t" style="left:23px;top:169px;font-size:14px;color:#fff">0.87</div>
<div class="t" style="left:56px;top:151px;font-size:36px;color:#fff">95</div>
<div class="t" style="left:99px;top:152px;font-size:14px;color:#fff">4</div>
<div class="t" style="left:149px;top:169px;font-size:14px;color:#fff">0.87</div>
<div class="t" style="left:182px;top:151px;font-size:36px;color:#fff">95</div>
<div class="t" style="left:226px;top:152px;font-size:14px;color:#fff">8</div>
<div class="a" style="left:1562px;top:125px;width:210px;height:223px;background:#f0f0f0;border-style:solid;border-width:2px 2px 2px 2px;border-color:#505050 #c4c4c4 #c4c4c4 #505050"></div>
<div class="a" style="left:1564px;top:127px;width:206px;height:219px;border-style:solid;border-width:1px 0 0 1px;border-color:#fff"></div>
<div class="a" style="left:1568px;top:131px;width:198px;height:33px;background:#ae55e9"></div>
<div class="t f" style="left:1582.3px;top:136px;font-size:22px;color:#fff;transform:scaleX(1.0206);transform-origin:0 0">Pro Controller 改</div>
<div class="a" style="left:1568px;top:169px;width:198px;height:33px;background:#b8e4e4"></div>
<div class="t f" style="left:1584.8px;top:173px;font-size:24px;color:#0000e0;font-weight:bold;transform:scaleX(1.0347);transform-origin:0 0">Total   6.3pips</div>
<div class="a" style="left:1568px;top:207px;width:199px;height:32px;background:#ece9d8;border-style:solid;border-width:1px 2px 2px 1px;border-color:#fff #d0ccb8 #d0ccb8 #fff"></div>
<div class="t f" style="left:1586.4px;top:209px;font-size:23px;transform:scaleX(0.9821);transform-origin:0 0">全通貨ペア決済</div>
<div class="a" style="left:1568px;top:244px;width:98px;height:33px;background:#ece9d8;border-style:solid;border-width:1px 2px 2px 1px;border-color:#fff #d0ccb8 #d0ccb8 #fff"></div>
<div class="t f" style="left:1568.5px;top:247.5px;font-size:20px;transform:scaleX(0.9697);transform-origin:0 0">現通貨決済</div>
<div class="a" style="left:1669px;top:244px;width:98px;height:33px;background:#ece9d8;border-style:solid;border-width:1px 2px 2px 1px;border-color:#fff #d0ccb8 #d0ccb8 #fff"></div>
<div class="t f" style="left:1678.2px;top:247.5px;font-size:20px;transform:scaleX(0.9911);transform-origin:0 0">自動決済</div>
<div class="a" style="left:1568px;top:282px;width:98px;height:28px;background:#ece9d8;border-style:solid;border-width:1px 2px 2px 1px;border-color:#fff #d0ccb8 #d0ccb8 #fff"></div>
<div class="t f" style="left:1574.3px;top:284px;font-size:20px;transform:scaleX(1.0654);transform-origin:0 0">Pips消去</div>
<div class="a" style="left:1669px;top:282px;width:98px;height:28px;background:#ece9d8;border-style:solid;border-width:1px 2px 2px 1px;border-color:#fff #d0ccb8 #d0ccb8 #fff"></div>
<div class="t f" style="left:1677.3px;top:284px;font-size:20px;transform:scaleX(1.0025);transform-origin:0 0">画面保存</div>
<div class="a" style="left:1568px;top:315px;width:199px;height:28px;background:#dcdcdc;border-style:solid;border-width:1px 2px 2px 1px;border-color:#fff #bcbcbc #bcbcbc #fff"></div>
<div class="t f" style="left:1628.2px;top:315px;font-size:20px;transform:scaleX(1.0193);transform-origin:0 0">x 閉じる</div>
<svg class="a" style="left:1562px;top:209px" width="210" height="1"><line x1="0" y1="0.5" x2="210" y2="0.5" stroke="#a52a2a" stroke-dasharray="18 6" stroke-dashoffset="4" shape-rendering="crispEdges"/></svg>
<div class="a" style="left:1586px;top:359px;width:43px;height:37px;border:1px solid #a08c78;background:#fff"></div>
<div class="t f" style="left:1587px;top:363px;font-size:26px;color:#0000ff;font-weight:bold;transform:scaleX(1.1236);transform-origin:0 0">6.3</div>
<div class="a" style="left:1584px;top:357px;width:3px;height:3px;border:1px solid #0000ff"></div>
<svg class="a" style="left:1651px;top:568px" width="132" height="109" viewBox="0 0 132 109"><defs><linearGradient id="cg" x1="0" y1="0" x2="0" y2="1"><stop offset="0" stop-color="#2a2610"/><stop offset="0.08" stop-color="#3e3a1c"/><stop offset="1" stop-color="#403c1e"/></linearGradient></defs><rect x="0" y="0" width="132" height="109" fill="#3c3930"/><rect x="7" y="6" width="118" height="97" rx="11" fill="url(#cg)"/><circle cx="65.7" cy="9.9" r="1.8" fill="#f39a12"/><line x1="71.0" y1="12.1" x2="71.4" y2="8.7" stroke="#f39a12" stroke-width="1.3"/><line x1="76.3" y1="12.8" x2="77.0" y2="9.4" stroke="#f39a12" stroke-width="1.3"/><line x1="81.5" y1="14.0" x2="82.5" y2="10.7" stroke="#f39a12" stroke-width="1.3"/><line x1="86.4" y1="15.6" x2="87.9" y2="12.4" stroke="#f39a12" stroke-width="1.3"/><circle cx="92.2" cy="15.9" r="1.8" fill="#f39a12"/><line x1="95.7" y1="20.0" x2="97.7" y2="17.2" stroke="#f39a12" stroke-width="1.3"/><line x1="99.8" y1="22.8" x2="102.2" y2="20.2" stroke="#f39a12" stroke-width="1.3"/><line x1="103.6" y1="26.0" x2="106.2" y2="23.6" stroke="#f39a12" stroke-width="1.3"/><line x1="107.0" y1="29.4" x2="109.8" y2="27.4" stroke="#f39a12" stroke-width="1.3"/><circle cx="111.6" cy="32.1" r="1.8" fill="#f39a12"/><line x1="112.3" y1="37.1" x2="115.5" y2="35.7" stroke="#f39a12" stroke-width="1.3"/><line x1="114.2" y1="41.3" x2="117.5" y2="40.2" stroke="#f39a12" stroke-width="1.3"/><line x1="115.6" y1="45.6" x2="119.0" y2="44.8" stroke="#f39a12" stroke-width="1.3"/><line x1="116.4" y1="50.0" x2="119.9" y2="49.6" stroke="#f39a12" stroke-width="1.3"/><circle cx="118.7" cy="54.4" r="1.8" fill="#f39a12"/><line x1="116.4" y1="58.8" x2="119.9" y2="59.2" stroke="#f39a12" stroke-width="1.3"/><line x1="115.6" y1="63.2" x2="119.0" y2="64.0" stroke="#f39a12" stroke-width="1.3"/><line x1="114.2" y1="67.5" x2="117.5" y2="68.6" stroke="#f39a12" stroke-width="1.3"/><line x1="112.3" y1="71.7" x2="115.5" y2="73.1" stroke="#f39a12" stroke-width="1.3"/><circle cx="111.6" cy="76.6" r="1.8" fill="#f39a12"/><line x1="107.0" y1="79.4" x2="109.8" y2="81.4" stroke="#f39a12" stroke-width="1.3"/><line x1="103.6" y1="82.8" x2="106.2" y2="85.2" stroke="#f39a12" stroke-width="1.3"/><line x1="99.8" y1="86.0" x2="102.2" y2="88.6" stroke="#f39a12" stroke-width="1.3"/><line x1="95.7" y1="88.8" x2="97.7" y2="91.6" stroke="#f39a12" stroke-width="1.3"/><circle cx="92.2" cy="92.9" r="1.8" fill="#f39a12"/><line x1="86.4" y1="93.2" x2="87.9" y2="96.4" stroke="#f39a12" stroke-width="1.3"/><line x1="81.5" y1="94.8" x2="82.5" y2="98.1" stroke="#f39a12" stroke-width="1.3"/><line x1="76.3" y1="96.0" x2="77.0" y2="99.4" stroke="#f39a12" stroke-width="1.3"/><line x1="71.0" y1="96.7" x2="71.4" y2="100.1" stroke="#f39a12" stroke-width="1.3"/><circle cx="65.7" cy="98.9" r="1.8" fill="#f39a12"/><line x1="60.4" y1="96.7" x2="60.0" y2="100.1" stroke="#f39a12" stroke-width="1.3"/><line x1="55.1" y1="96.0" x2="54.4" y2="99.4" stroke="#f39a12" stroke-width="1.3"/><line x1="49.9" y1="94.8" x2="48.9" y2="98.1" stroke="#f39a12" stroke-width="1.3"/><line x1="45.0" y1="93.2" x2="43.5" y2="96.4" stroke="#f39a12" stroke-width="1.3"/><circle cx="39.2" cy="92.9" r="1.8" fill="#f39a12"/><line x1="35.7" y1="88.8" x2="33.7" y2="91.6" stroke="#f39a12" stroke-width="1.3"/><line x1="31.6" y1="86.0" x2="29.2" y2="88.6" stroke="#f39a12" stroke-width="1.3"/><line x1="27.8" y1="82.8" x2="25.2" y2="85.2" stroke="#f39a12" stroke-width="1.3"/><line x1="24.4" y1="79.4" x2="21.6" y2="81.4" stroke="#f39a12" stroke-width="1.3"/><circle cx="19.8" cy="76.7" r="1.8" fill="#f39a12"/><line x1="19.1" y1="71.7" x2="15.9" y2="73.1" stroke="#f39a12" stroke-width="1.3"/><line x1="17.2" y1="67.5" x2="13.9" y2="68.6" stroke="#f39a12" stroke-width="1.3"/><line x1="15.8" y1="63.2" x2="12.4" y2="64.0" stroke="#f39a12" stroke-width="1.3"/><line x1="15.0" y1="58.8" x2="11.5" y2="59.2" stroke="#f39a12" stroke-width="1.3"/><circle cx="12.7" cy="54.4" r="1.8" fill="#f39a12"/><line x1="15.0" y1="50.0" x2="11.5" y2="49.6" stroke="#f39a12" stroke-width="1.3"/><line x1="15.8" y1="45.6" x2="12.4" y2="44.8" stroke="#f39a12" stroke-width="1.3"/><line x1="17.2" y1="41.3" x2="13.9" y2="40.2" stroke="#f39a12" stroke-width="1.3"/><line x1="19.1" y1="37.1" x2="15.9" y2="35.7" stroke="#f39a12" stroke-width="1.3"/><circle cx="19.8" cy="32.1" r="1.8" fill="#f39a12"/><line x1="24.4" y1="29.4" x2="21.6" y2="27.4" stroke="#f39a12" stroke-width="1.3"/><line x1="27.8" y1="26.0" x2="25.2" y2="23.6" stroke="#f39a12" stroke-width="1.3"/><line x1="31.6" y1="22.8" x2="29.2" y2="20.2" stroke="#f39a12" stroke-width="1.3"/><line x1="35.7" y1="20.0" x2="33.7" y2="17.2" stroke="#f39a12" stroke-width="1.3"/><circle cx="39.2" cy="15.9" r="1.8" fill="#f39a12"/><line x1="45.0" y1="15.6" x2="43.5" y2="12.4" stroke="#f39a12" stroke-width="1.3"/><line x1="49.9" y1="14.0" x2="48.9" y2="10.7" stroke="#f39a12" stroke-width="1.3"/><line x1="55.1" y1="12.8" x2="54.4" y2="9.4" stroke="#f39a12" stroke-width="1.3"/><line x1="60.4" y1="12.1" x2="60.0" y2="8.7" stroke="#f39a12" stroke-width="1.3"/><text x="87.7" y="28.2" font-family="Liberation Serif" font-weight="bold" font-size="16" fill="#f39a12" text-anchor="middle">1</text><text x="103.8" y="41.4" font-family="Liberation Serif" font-weight="bold" font-size="16" fill="#f39a12" text-anchor="middle">2</text><text x="109.7" y="59.4" font-family="Liberation Serif" font-weight="bold" font-size="16" fill="#f39a12" text-anchor="middle">3</text><text x="103.8" y="77.4" font-family="Liberation Serif" font-weight="bold" font-size="16" fill="#f39a12" text-anchor="middle">4</text><text x="87.7" y="90.6" font-family="Liberation Serif" font-weight="bold" font-size="16" fill="#f39a12" text-anchor="middle">5</text><text x="65.7" y="95.4" font-family="Liberation Serif" font-weight="bold" font-size="16" fill="#f39a12" text-anchor="middle">6</text><text x="43.7" y="90.6" font-family="Liberation Serif" font-weight="bold" font-size="16" fill="#f39a12" text-anchor="middle">7</text><text x="27.6" y="77.4" font-family="Liberation Serif" font-weight="bold" font-size="16" fill="#f39a12" text-anchor="middle">8</text><text x="21.7" y="59.4" font-family="Liberation Serif" font-weight="bold" font-size="16" fill="#f39a12" text-anchor="middle">9</text><text x="27.6" y="41.4" font-family="Liberation Serif" font-weight="bold" font-size="16" fill="#f39a12" text-anchor="middle">10</text><text x="43.7" y="28.2" font-family="Liberation Serif" font-weight="bold" font-size="16" fill="#f39a12" text-anchor="middle">11</text><text x="65.7" y="23.4" font-family="Liberation Serif" font-weight="bold" font-size="16" fill="#f39a12" text-anchor="middle">12</text><path d="M20,50.5 L45,50.5 L60,51 L67,51 L84,51.5 L84,57.5 L67,57.5 L55,58 L45,59.5 L37,59.5 L36,56 L30,54.5 L21,54.5 Z" fill="#f39a12"/><circle cx="65.5" cy="55.5" r="0.9" fill="#3e3a1c"/></svg>
<div class="t f" style="left:15.600000000000001px;top:716px;font-size:15px;color:#6d6d6d;transform:scaleX(0.8925);transform-origin:0 0">EURGBP,Daily</div>
<div class="t f" style="left:135px;top:716px;font-size:15px;color:#6d6d6d;transform:scaleX(0.8548);transform-origin:0 0">EURGBP,H4</div>
<div class="t f" style="left:237.8px;top:716px;font-size:15px;color:#6d6d6d;transform:scaleX(0.8703);transform-origin:0 0">EURGBP,M15</div>
<div class="a" style="left:120px;top:716px;width:1px;height:19px;background:#6d6d6d"></div>
<div class="a" style="left:224px;top:716px;width:1px;height:19px;background:#6d6d6d"></div>
<div class="a" style="left:336px;top:712px;width:104px;height:24px;background:#fff;border-style:solid;border-color:#000;border-width:0 1px 1px 1px;box-shadow:1px 1px 0 #c8c8c8"></div>
<div class="t f" style="left:349.4px;top:716px;font-size:15px;transform:scaleX(0.8663);transform-origin:0 0">EURGBP,M5</div>
<svg class="a" style="left:1850px;top:718px" width="34" height="12"><path d="M4.5,1.5 L0.5,6 L4.5,10.5 Z M27,1.5 L31,6 L27,10.5 Z" fill="#a0a0a0"/></svg>
<div class="a" style="left:0;top:737px;width:1893px;height:1px;background:#fff"></div>
<div class="a" style="left:0;top:760px;width:13px;height:185px;background:linear-gradient(#dce6f0,#c4d4e4)"></div>
<div class="t" style="left:0px;top:743px;font-size:12px">&#10005;</div>
<div class="t" style="left:-4px;top:944px;font-size:13px;line-height:14px;transform:rotate(-90deg);transform-origin:0 0;letter-spacing:-1.4px">ターミナル</div>
<div class="a" style="left:13px;top:742px;width:1875px;height:175px;background:#fff;border-top:1px solid #a0a0a0;border-left:1px solid #a0a0a0"></div>
<div class="t" style="left:21px;top:749px;font-size:14px">注文番号</div>
<div class="t" style="left:90px;top:750px;font-size:11px;color:#808080">/</div>
<div class="t" style="left:249px;width:200px;text-align:right;top:749px;font-size:14px">時間</div>
<div class="t" style="left:378px;width:200px;text-align:right;top:749px;font-size:14px">取引種別</div>
<div class="t" style="left:478px;width:200px;text-align:right;top:749px;font-size:14px">数量</div>
<div class="t" style="left:606px;width:200px;text-align:right;top:749px;font-size:14px">通貨ペア</div>
<div class="t" style="left:747px;width:200px;text-align:right;top:749px;font-size:14px">価格</div>
<div class="t" style="left:890px;width:200px;text-align:right;top:749px;font-size:14px">決済逆指値(S/L)</div>
<div class="t" style="left:1032px;width:200px;text-align:right;top:749px;font-size:14px">決済指値(T/P)</div>
<div class="t" style="left:1174px;width:200px;text-align:right;top:749px;font-size:14px">価格</div>
<div class="t" style="left:1315px;width:200px;text-align:right;top:749px;font-size:14px">手数料</div>
<div class="t" style="left:1458px;width:200px;text-align:right;top:749px;font-size:14px">スワップ</div>
<div class="t" style="left:1682px;width:200px;text-align:right;top:749px;font-size:14px">損益</div>
<div class="a" style="left:197px;top:743px;width:1px;height:26px;background:#e5e5e5"></div>
<div class="a" style="left:454px;top:743px;width:1px;height:26px;background:#e5e5e5"></div>
<div class="a" style="left:583px;top:743px;width:1px;height:26px;background:#e5e5e5"></div>
<div class="a" style="left:683px;top:743px;width:1px;height:26px;background:#e5e5e5"></div>
<div class="a" style="left:811px;top:743px;width:1px;height:26px;background:#e5e5e5"></div>
<div class="a" style="left:952px;top:743px;width:1px;height:26px;background:#e5e5e5"></div>
<div class="a" style="left:1095px;top:743px;width:1px;height:26px;background:#e5e5e5"></div>
<div class="a" style="left:1237px;top:743px;width:1px;height:26px;background:#e5e5e5"></div>
<div class="a" style="left:1379px;top:743px;width:1px;height:26px;background:#e5e5e5"></div>
<div class="a" style="left:1520px;top:743px;width:1px;height:26px;background:#e5e5e5"></div>
<div class="a" style="left:1663px;top:743px;width:1px;height:26px;background:#e5e5e5"></div>
<div class="a" style="left:14px;top:769px;width:1873px;height:25px;background:#0078d7"></div>
<div class="a" style="left:197px;top:769px;width:1px;height:25px;background:#1d5fa0"></div>
<div class="a" style="left:454px;top:769px;width:1px;height:25px;background:#1d5fa0"></div>
<div class="a" style="left:583px;top:769px;width:1px;height:25px;background:#1d5fa0"></div>
<div class="a" style="left:683px;top:769px;width:1px;height:25px;background:#1d5fa0"></div>
<div class="a" style="left:811px;top:769px;width:1px;height:25px;background:#1d5fa0"></div>
<div class="a" style="left:952px;top:769px;width:1px;height:25px;background:#1d5fa0"></div>
<div class="a" style="left:1095px;top:769px;width:1px;height:25px;background:#1d5fa0"></div>
<div class="a" style="left:1237px;top:769px;width:1px;height:25px;background:#1d5fa0"></div>
<div class="a" style="left:1379px;top:769px;width:1px;height:25px;background:#1d5fa0"></div>
<div class="a" style="left:1520px;top:769px;width:1px;height:25px;background:#1d5fa0"></div>
<div class="a" style="left:1663px;top:769px;width:1px;height:25px;background:#1d5fa0"></div>
<div class="t" style="left:42px;top:774px;font-size:14px;color:#fff">77239989</div>
<div class="t" style="left:250px;width:200px;text-align:right;top:774px;font-size:14px;color:#fff">2025.11.04 13:15:19</div>
<div class="t" style="left:379px;width:200px;text-align:right;top:774px;font-size:14px;color:#fff">sell</div>
<div class="t" style="left:479px;width:200px;text-align:right;top:774px;font-size:14px;color:#fff">0.07</div>
<div class="t" style="left:607px;width:200px;text-align:right;top:774px;font-size:14px;color:#fff">eurgbp</div>
<div class="t" style="left:748px;width:200px;text-align:right;top:774px;font-size:14px;color:#fff">0.88021</div>
<div class="t" style="left:891px;width:200px;text-align:right;top:774px;font-size:14px;color:#fff">0.88521</div>
<div class="t" style="left:1033px;width:200px;text-align:right;top:774px;font-size:14px;color:#fff">0.87821</div>
<div class="t" style="left:1175px;width:200px;text-align:right;top:774px;font-size:14px;color:#fff">0.87958</div>
<div class="t" style="left:1316px;width:200px;text-align:right;top:774px;font-size:14px;color:#fff">-64</div>
<div class="t" style="left:1459px;width:200px;text-align:right;top:774px;font-size:14px;color:#fff">0</div>
<div class="t" style="left:1657px;width:200px;text-align:right;top:774px;font-size:14px;color:#fff">884</div>
<svg class="a" style="left:1866px;top:775px" width="16" height="16"><path d="M2.5,2.5 L13.5,13.5 M13.5,2.5 L2.5,13.5" stroke="#a8a8a8" stroke-width="2"/></svg>
<svg class="a" style="left:17px;top:772px" width="20" height="20" viewBox="0 0 20 20"><path d="M2,1 H11 L15,5 V18 H2 Z" fill="#fff" stroke="#888" stroke-width="1"/><circle cx="13" cy="15" r="4" fill="#e8401c" stroke="#b02000" stroke-width="0.8"/></svg>
<div class="a" style="left:14px;top:794px;width:1873px;height:25px;background:#c8c8c8"></div>
<svg class="a" style="left:17px;top:797px" width="18" height="18" viewBox="0 0 18 18"><rect x="1" y="1" width="15" height="15" fill="#fff" stroke="#888"/><path d="M8.5,3 L14,9 H11 V14 H6 V9 H3 Z" fill="#18a018"/></svg>
<div class="t f" style="left:40.5px;top:798px;font-size:14px;font-weight:bold;transform:scaleX(1.0375);transform-origin:0 0">残高: 258 629 JPY  有効証拠金: 259 449  必要証拠金: 2 471  余剰証拠金: 256 978  証拠金維持率: 10498.98%</div>
<div class="t" style="left:1657px;width:200px;text-align:right;top:799px;font-size:14px;font-weight:bold">820</div>
<div class="a" style="left:13px;top:917px;width:1875px;height:1px;background:#000"></div>
<div class="a" style="left:16px;top:917px;width:55px;height:25px;background:#fff;border-style:solid;border-color:#000;border-width:0 1px 1px 1px;box-shadow:1px 1px 0 #c8c8c8"></div>
<div class="t f" style="left:28.5px;top:921.5px;font-size:15px;transform:scaleX(0.9759);transform-origin:0 0">取引</div>
<div class="t f" style="left:83.7px;top:921.5px;font-size:15px;color:#6d6d6d;transform:scaleX(0.9814);transform-origin:0 0">運用比率</div>
<div class="a" style="left:156px;top:921px;width:1px;height:19px;background:#6d6d6d"></div>
<div class="t f" style="left:168.6px;top:921.5px;font-size:15px;color:#6d6d6d;transform:scaleX(0.9949);transform-origin:0 0">口座履歴</div>
<div class="a" style="left:241px;top:921px;width:1px;height:19px;background:#6d6d6d"></div>
<div class="t f" style="left:253.6px;top:921.5px;font-size:15px;color:#6d6d6d;transform:scaleX(0.6983);transform-origin:0 0">ニュース</div>
<div class="a" style="left:308px;top:921px;width:1px;height:19px;background:#6d6d6d"></div>
<div class="t f" style="left:320.5px;top:921.5px;font-size:15px;color:#6d6d6d;transform:scaleX(0.8101);transform-origin:0 0">アラーム設定</div>
<div class="a" style="left:407px;top:921px;width:1px;height:19px;background:#6d6d6d"></div>
<div class="t f" style="left:419.7px;top:921.5px;font-size:15px;color:#6d6d6d;transform:scaleX(0.7423);transform-origin:0 0">メールボックス</div>
<div class="a" style="left:521px;top:921px;width:1px;height:19px;background:#6d6d6d"></div>
<div class="t f" style="left:532.4px;top:921.5px;font-size:15px;color:#6d6d6d;transform:scaleX(0.6919);transform-origin:0 0">マーケット</div>
<div class="a" style="left:597px;top:921px;width:1px;height:19px;background:#6d6d6d"></div>
<div class="t f" style="left:609.9px;top:921.5px;font-size:15px;color:#6d6d6d;transform:scaleX(0.7559);transform-origin:0 0">シグナル</div>
<div class="a" style="left:668px;top:921px;width:1px;height:19px;background:#6d6d6d"></div>
<div class="t f" style="left:680.8px;top:921.5px;font-size:15px;color:#6d6d6d;transform:scaleX(0.9966);transform-origin:0 0">記事</div>
<div class="a" style="left:723px;top:921px;width:1px;height:19px;background:#6d6d6d"></div>
<div class="t f" style="left:735.4px;top:921.5px;font-size:15px;color:#6d6d6d;transform:scaleX(0.7000);transform-origin:0 0">ライブラリ</div>
<div class="a" style="left:801px;top:921px;width:1px;height:19px;background:#6d6d6d"></div>
<div class="t f" style="left:813.5px;top:921.5px;font-size:15px;color:#6d6d6d;transform:scaleX(0.7236);transform-origin:0 0">エキスパート</div>
<div class="a" style="left:892px;top:921px;width:1px;height:19px;background:#6d6d6d"></div>
<div class="t f" style="left:904.1px;top:921.5px;font-size:15px;color:#6d6d6d;transform:scaleX(0.9814);transform-origin:0 0">操作履歴</div>
<div class="a" style="left:976px;top:921px;width:1px;height:19px;background:#6d6d6d"></div>
<div class="t" style="left:500px;top:930px;font-size:10px;font-weight:bold;color:#e02020">6</div>
<div class="a" style="left:0;top:945px;width:1893px;height:1px;background:#fff"></div>
<div class="a" style="left:0;top:949px;width:1893px;height:1px;background:#a0a0a0"></div>
<div class="a" style="left:0;top:950px;width:1893px;height:29px;background:#f0f0f0"></div>
<div class="t f" style="left:-5px;top:958px;font-size:15px;transform:scaleX(0.8085);transform-origin:0 0">F1キーでヘルプが表示されます</div>
<div class="a" style="left:997px;top:954px;width:1px;height:25px;background:#c8c8c8"></div>
<div class="a" style="left:1147px;top:954px;width:1px;height:25px;background:#c8c8c8"></div>
<div class="a" style="left:1277px;top:954px;width:1px;height:25px;background:#c8c8c8"></div>
<div class="a" style="left:1367px;top:954px;width:1px;height:25px;background:#c8c8c8"></div>
<div class="a" style="left:1456px;top:954px;width:1px;height:25px;background:#c8c8c8"></div>
<div class="a" style="left:1541px;top:954px;width:1px;height:25px;background:#c8c8c8"></div>
<div class="a" style="left:1628px;top:954px;width:1px;height:25px;background:#c8c8c8"></div>
<div class="a" style="left:1712px;top:954px;width:1px;height:25px;background:#c8c8c8"></div>
<div class="t f" style="left:1003px;top:958px;font-size:15px;transform:scaleX(0.8595);transform-origin:0 0">EURGBP</div>
<svg class="a" style="left:1716px;top:957px" width="34" height="16" viewBox="0 0 34 16"><rect x="1" y="0" width="3" height="10.0" fill="#5a7800"/><rect x="1" y="10.6" width="3" height="5.4" fill="#0a3858"/><rect x="5" y="0" width="3" height="8.8" fill="#5a7800"/><rect x="5" y="9.4" width="3" height="6.6" fill="#0a3858"/><rect x="9" y="0" width="3" height="7.7" fill="#5a7800"/><rect x="9" y="8.3" width="3" height="7.7" fill="#0a3858"/><rect x="13" y="0" width="3" height="6.6" fill="#5a7800"/><rect x="13" y="7.2" width="3" height="8.8" fill="#0a3858"/><rect x="17" y="0" width="3" height="5.8" fill="#5a7800"/><rect x="17" y="6.4" width="3" height="9.6" fill="#0a3858"/><rect x="21" y="0" width="3" height="4.7" fill="#5a7800"/><rect x="21" y="5.3" width="3" height="10.7" fill="#0a3858"/><rect x="25" y="0" width="3" height="3.7" fill="#5a7800"/><rect x="25" y="4.3" width="3" height="11.7" fill="#0a3858"/><rect x="29" y="0" width="3" height="2.9" fill="#5a7800"/><rect x="29" y="3.5" width="3" height="12.5" fill="#0a3858"/></svg>
<div class="t f" style="left:1752.8px;top:958px;font-size:15px;transform:scaleX(1.0017);transform-origin:0 0">3647/6 kb</div>
<svg class="a" style="left:1878px;top:965px" width="14" height="14"><path d="M13,2 L2,13 M13,6 L6,13 M13,10 L10,13" stroke="#a0a0a0" stroke-width="1"/></svg>
</body></html>
